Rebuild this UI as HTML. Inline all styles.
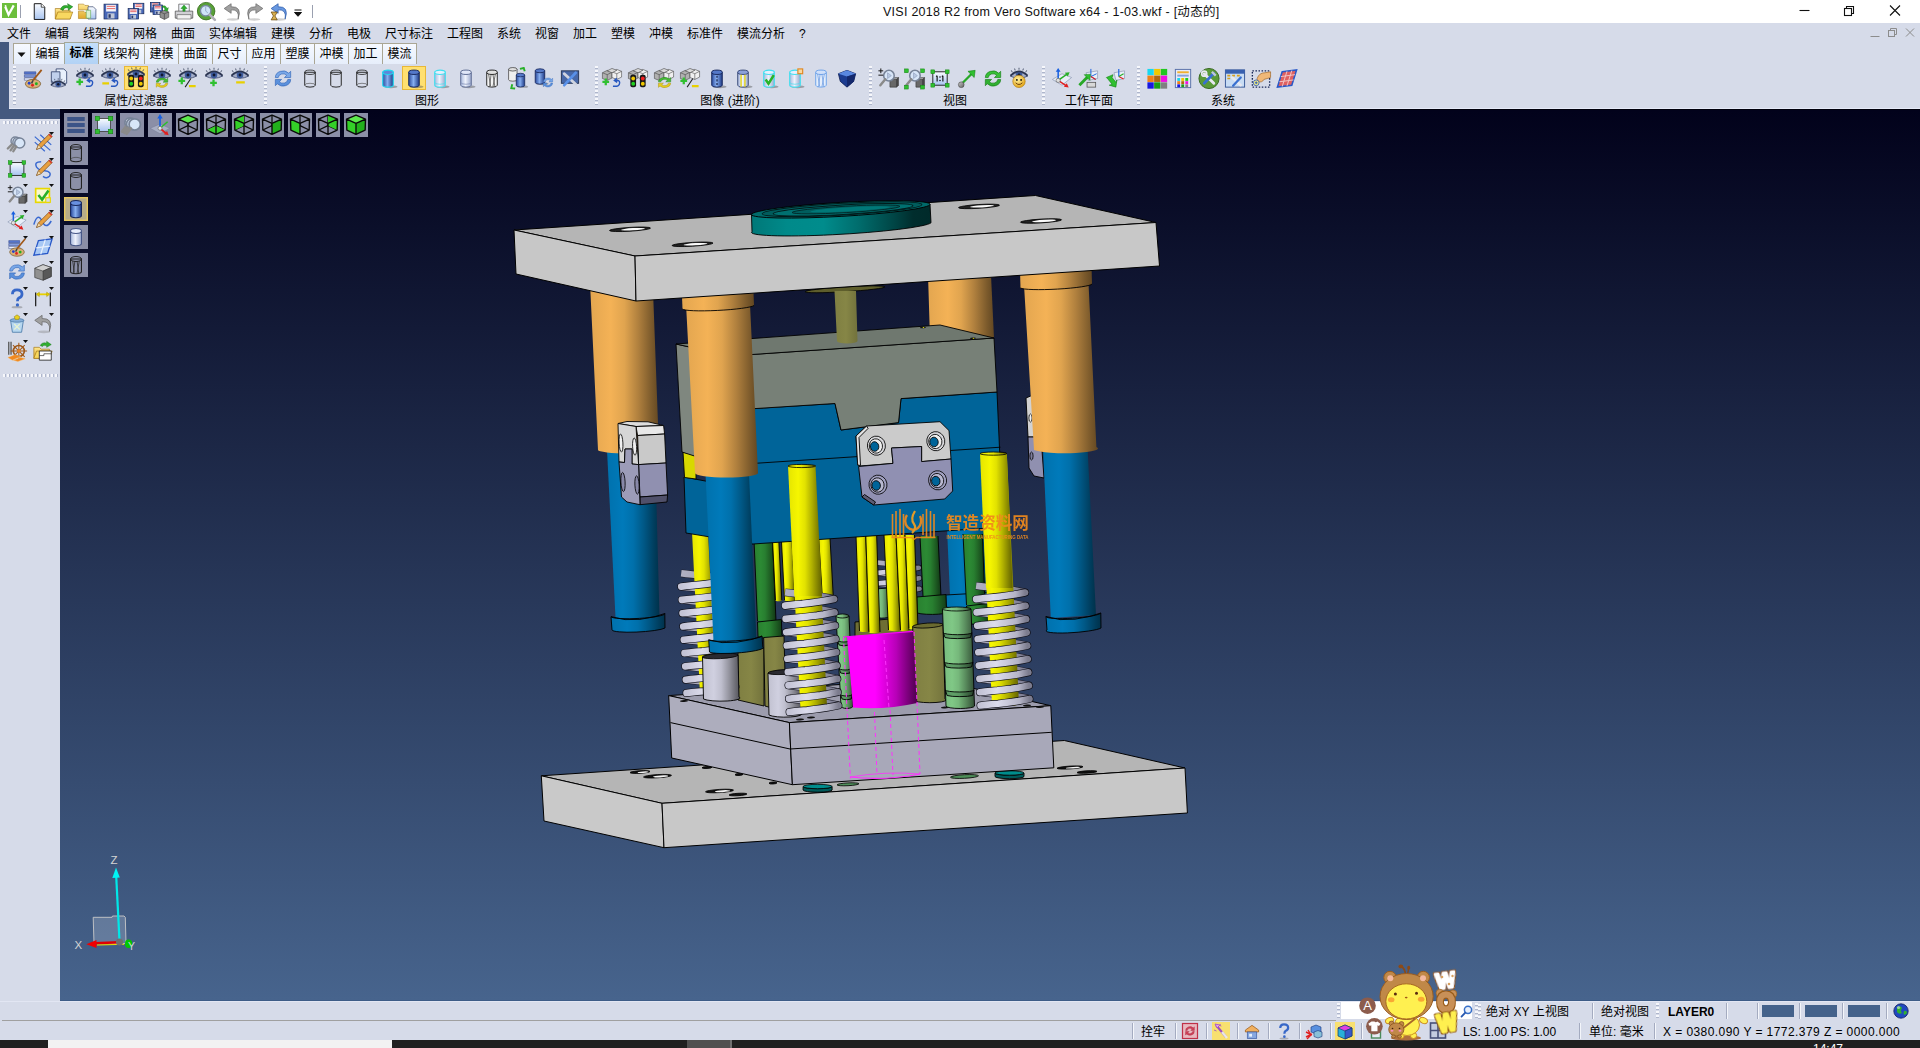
<!DOCTYPE html>
<html lang="zh-CN">
<head>
<meta charset="utf-8">
<title>VISI 2018 R2 from Vero Software x64 - 1-03.wkf - [动态的]</title>
<style>
*{box-sizing:border-box;margin:0;padding:0}
html,body{width:1920px;height:1048px;overflow:hidden;background:#d6dbe9;font-family:"Liberation Sans","Noto Sans CJK SC",sans-serif;font-size:12px;color:#000}
.abs{position:absolute}
#title{left:0;top:0;width:1920px;height:23px;background:#fff}
#title .cap{position:absolute;left:883px;top:1px;font-size:12.5px;white-space:nowrap;letter-spacing:0.26px;color:#111}
#menu{left:0;top:23px;width:1920px;height:20px;background:#d6dbe9}
#menu span{position:absolute;top:3px;white-space:nowrap;font-size:12px;line-height:16px}
#slate1{left:0;top:42px;width:9px;height:77px;background:#44597f}
#slate2{left:0;top:109px;width:60px;height:10px;background:#44597f}
#tabs{left:13px;top:43px;height:21px}
.tab{position:absolute;top:0;height:21px;border:1px solid #aaa694;border-bottom:none;background:linear-gradient(#f6f9ff,#e6eefb);text-align:center;line-height:21px;font-size:12px}
.tab.sel{background:linear-gradient(#c4dffa,#b2d2f5);top:-1px;height:22px;border-color:#a4a898;font-weight:bold;line-height:20px}
#tbar{left:9px;top:64px;width:1911px;height:45px;background:#d6dbe9;border-bottom:1px solid #e6eaf8}
.glabel{position:absolute;top:95px;font-size:12px;line-height:13px;white-space:nowrap;transform:translateX(-50%)}
.gsep{position:absolute;top:66px;width:3px;height:40px;background-image:repeating-linear-gradient(#f6f7fb 0,#f6f7fb 2px,#aeb6cc 2px,#aeb6cc 3px,transparent 3px,transparent 4px)}
#left{left:0;top:119px;width:60px;height:881px;background:#d6dbe9}
.hsep{position:absolute;left:3px;width:55px;height:3px;background-image:repeating-linear-gradient(90deg,#f6f7fb 0,#f6f7fb 2px,#aeb6cc 2px,#aeb6cc 3px,transparent 3px,transparent 4px)}
#view{left:60px;top:109px;width:1860px;height:892px;border-top:1px solid #00000c;border-bottom:1px solid #3d5c87;background:linear-gradient(#02021b,#47648d)}
#status{left:0;top:1000px;width:1920px;height:40px;background:linear-gradient(transparent 1px,#e2e6f3 1px,#e2e6f3 2px,#d6dbe9 2px)}
#task{left:0;top:1040px;width:1920px;height:8px;background:#202020}
.vb{position:absolute;width:22px;height:22px;background:#8b90aa}
.hline{position:absolute;left:2px;top:20px;width:1334px;height:1px;background:#a0a0a0}
.vdot{position:absolute;width:3px;height:16px;background-image:repeating-linear-gradient(#f6f7fb 0,#f6f7fb 2px,#aeb6cc 2px,#aeb6cc 3px,transparent 3px,transparent 4px)}
.vs{position:absolute;width:2px;height:16px;border-left:1px solid #a4abc0;border-right:1px solid #f4f6fb}
.st{position:absolute;white-space:nowrap;font-size:12px;line-height:16px;margin-top:1px}
.wc{position:absolute;top:0;width:46px;height:23px}
</style>
</head>
<body>
<div id="title" class="abs"><div class="cap">VISI 2018 R2 from Vero Software x64 - 1-03.wkf - [动态的]</div></div>
<div id="menu" class="abs">
<span style="left:7px">文件</span><span style="left:45px">编辑</span><span style="left:83px">线架构</span><span style="left:133px">网格</span><span style="left:171px">曲面</span><span style="left:209px">实体编辑</span><span style="left:271px">建模</span><span style="left:309px">分析</span><span style="left:347px">电极</span><span style="left:385px">尺寸标注</span><span style="left:447px">工程图</span><span style="left:497px">系统</span><span style="left:535px">视窗</span><span style="left:573px">加工</span><span style="left:611px">塑模</span><span style="left:649px">冲模</span><span style="left:687px">标准件</span><span style="left:737px">模流分析</span><span style="left:799px">?</span>
</div>
<svg class="abs" style="left:1780px;top:0" width="140" height="44" viewBox="0 0 140 44"><g fill="none" stroke="#111" stroke-width="1.1"><path d="M19.5,10.5 h10"/><rect x="64.5" y="8.5" width="7" height="7"/><path d="M66.5,8.5 v-2 h7 v7 h-2"/><path d="M110,5.5 l10,10 M120,5.5 l-10,10"/></g><g fill="none" stroke="#8c8c8c" stroke-width="1"><path d="M90.5,36.5 h9"/><rect x="108.500" y="30.5" width="6" height="6"/><path d="M110.500,30.500 v-2 h6 v6 h-2"/><path d="M126,28.500 l8,8 M134,28.500 l-8,8"/></g></svg>
<div id="slate1" class="abs"></div><div id="slate2" class="abs"></div>
<div id="tbar" class="abs"></div>
<div id="tabs" class="abs">
<div class="tab" style="left:0;width:18px"><svg width="10" height="6" viewBox="0 0 10 6" style="position:absolute;left:3px;top:8px"><path d="M0.500,0.500 h8 l-4,4.500 Z" fill="#111"/></svg></div>
<div class="tab" style="left:17px;width:35px">编辑</div>
<div class="tab sel" style="left:51px;width:35px">标准</div>
<div class="tab" style="left:85px;width:47px">线架构</div>
<div class="tab" style="left:131px;width:35px">建模</div>
<div class="tab" style="left:165px;width:35px">曲面</div>
<div class="tab" style="left:199px;width:35px">尺寸</div>
<div class="tab" style="left:233px;width:35px">应用</div>
<div class="tab" style="left:267px;width:35px">塑膜</div>
<div class="tab" style="left:301px;width:35px">冲模</div>
<div class="tab" style="left:335px;width:35px">加工</div>
<div class="tab" style="left:369px;width:35px">模流</div>
</div>
<div class="glabel" style="left:136px">属性/过滤器</div>
<div class="glabel" style="left:427px">图形</div>
<div class="glabel" style="left:730px">图像 (进阶)</div>
<div class="glabel" style="left:955px">视图</div>
<div class="glabel" style="left:1089px">工作平面</div>
<div class="glabel" style="left:1223px">系统</div>
<div class="gsep" style="left:13px"></div><div class="gsep" style="left:264px"></div><div class="gsep" style="left:595px"></div><div class="gsep" style="left:869px"></div><div class="gsep" style="left:1042px"></div><div class="gsep" style="left:1137px"></div>
<div id="left" class="abs"><div class="hsep" style="top:2px"></div><div class="hsep" style="top:255px"></div></div>
<div id="view" class="abs"></div>
<svg class="abs" id="model" style="left:0;top:0" width="1920" height="1048" viewBox="0 0 1920 1048"><defs><linearGradient id="sprb" x1="0" y1="0" x2="1" y2="0"><stop offset="0" stop-color="#b0b0c2"/><stop offset="0.5" stop-color="#a4a4b6"/><stop offset="1" stop-color="#74748a"/></linearGradient><linearGradient id="sprg" gradientUnits="objectBoundingBox" x1="0" y1="0" x2="1" y2="0"><stop offset="0" stop-color="#c4c4d6"/><stop offset="0.35" stop-color="#dcdcec"/><stop offset="0.8" stop-color="#b4b4c6"/><stop offset="1" stop-color="#7c7c8e"/></linearGradient><linearGradient id="g1" x1="0" y1="0" x2="1" y2="0"><stop offset="0" stop-color="#0071ad"/><stop offset="0.3" stop-color="#007aba"/><stop offset="0.5" stop-color="#0070ab"/><stop offset="0.7" stop-color="#005886"/><stop offset="0.9" stop-color="#003d5d"/><stop offset="1" stop-color="#00314a"/></linearGradient><linearGradient id="g2" x1="0" y1="0" x2="1" y2="0"><stop offset="0" stop-color="#77ba7d"/><stop offset="0.3" stop-color="#80c886"/><stop offset="0.5" stop-color="#76b87b"/><stop offset="0.7" stop-color="#5c9060"/><stop offset="0.9" stop-color="#406443"/><stop offset="1" stop-color="#335036"/></linearGradient><linearGradient id="g3" x1="0" y1="0" x2="1" y2="0"><stop offset="0" stop-color="#298030"/><stop offset="0.3" stop-color="#2c8a34"/><stop offset="0.5" stop-color="#287f30"/><stop offset="0.7" stop-color="#206325"/><stop offset="0.9" stop-color="#16451a"/><stop offset="1" stop-color="#123715"/></linearGradient><linearGradient id="g4" x1="0" y1="0" x2="1" y2="0"><stop offset="0" stop-color="#e5e500"/><stop offset="0.3" stop-color="#f6f600"/><stop offset="0.5" stop-color="#e2e200"/><stop offset="0.7" stop-color="#b1b100"/><stop offset="0.9" stop-color="#7b7b00"/><stop offset="1" stop-color="#626200"/></linearGradient><linearGradient id="g5" x1="0" y1="0" x2="1" y2="0"><stop offset="0" stop-color="#7f7f42"/><stop offset="0.5" stop-color="#868646"/><stop offset="1" stop-color="#72723c"/></linearGradient><linearGradient id="g6" x1="0" y1="0" x2="1" y2="0"><stop offset="0" stop-color="#c1c1d0"/><stop offset="0.3" stop-color="#d0d0e0"/><stop offset="0.5" stop-color="#bfbfce"/><stop offset="0.7" stop-color="#9696a1"/><stop offset="0.9" stop-color="#686870"/><stop offset="1" stop-color="#53535a"/></linearGradient><linearGradient id="g7" x1="0" y1="0" x2="1" y2="0"><stop offset="0" stop-color="#599561"/><stop offset="0.3" stop-color="#60a068"/><stop offset="0.5" stop-color="#589360"/><stop offset="0.7" stop-color="#45734b"/><stop offset="0.9" stop-color="#305034"/><stop offset="1" stop-color="#26402a"/></linearGradient><linearGradient id="g8" x1="0" y1="0" x2="1" y2="0"><stop offset="0" stop-color="#ff00ff"/><stop offset="0.4" stop-color="#ff00ff"/><stop offset="0.7" stop-color="#b800b8"/><stop offset="1" stop-color="#4c004c"/></linearGradient><linearGradient id="g9" x1="0" y1="0" x2="1" y2="0"><stop offset="0" stop-color="#e3a650"/><stop offset="0.3" stop-color="#f4b256"/><stop offset="0.5" stop-color="#e0a44f"/><stop offset="0.7" stop-color="#b0803e"/><stop offset="0.9" stop-color="#7a592b"/><stop offset="1" stop-color="#624722"/></linearGradient><linearGradient id="g10" x1="0" y1="0" x2="1" y2="0"><stop offset="0" stop-color="#007878"/><stop offset="0.2" stop-color="#008a8a"/><stop offset="0.4" stop-color="#008c8c"/><stop offset="0.6" stop-color="#006c6c"/><stop offset="0.8" stop-color="#004444"/><stop offset="0.9" stop-color="#002d2d"/><stop offset="1" stop-color="#002a2a"/></linearGradient></defs><polygon points="541.3,775.8 1064.3,740.5 1185,768 662,803.3" fill="#b5b5b5" stroke="#000" stroke-width="1" stroke-linejoin="round" />
<polygon points="541.3,775.8 662,803.3 664,847.7 544,821" fill="#c9c9c9" stroke="#000" stroke-width="1" stroke-linejoin="round" />
<polygon points="662,803.3 1185,768 1187.4,813 664,847.7" fill="#c8c8c8" stroke="#000" stroke-width="1" stroke-linejoin="round" />
<ellipse cx="640" cy="772" rx="10" ry="1.3" fill="#111" stroke="#000" stroke-width="0.8" transform="rotate(-3.5 640 772)" />
<ellipse cx="643" cy="772.2" rx="5.5" ry="0.8" fill="#f4f4f4" stroke="none" stroke-width="0" transform="rotate(-3.5 643 772.2)" />
<ellipse cx="657.5" cy="776.2" rx="14" ry="1.6" fill="#111" stroke="#000" stroke-width="0.8" transform="rotate(-3.5 657.5 776.2)" />
<ellipse cx="660.5" cy="776.4" rx="7.7" ry="1" fill="#f4f4f4" stroke="none" stroke-width="0" transform="rotate(-3.5 660.5 776.4)" />
<ellipse cx="719.5" cy="791" rx="14" ry="1.6" fill="#111" stroke="#000" stroke-width="0.8" transform="rotate(-3.5 719.5 791)" />
<ellipse cx="722.5" cy="791.2" rx="7.7" ry="1" fill="#f4f4f4" stroke="none" stroke-width="0" transform="rotate(-3.5 722.5 791.2)" />
<ellipse cx="738" cy="794.5" rx="9" ry="1.2" fill="#111" stroke="#000" stroke-width="0.8" transform="rotate(-3.5 738 794.5)" />
<ellipse cx="1070" cy="767.5" rx="13" ry="1.4" fill="#111" stroke="#000" stroke-width="0.8" transform="rotate(-3.5 1070 767.5)" />
<ellipse cx="1073" cy="767.7" rx="7.2" ry="0.8" fill="#f4f4f4" stroke="none" stroke-width="0" transform="rotate(-3.5 1073 767.7)" />
<ellipse cx="1087" cy="772" rx="10" ry="1.2" fill="#111" stroke="#000" stroke-width="0.8" transform="rotate(-3.5 1087 772)" />
<ellipse cx="707" cy="767.5" rx="5" ry="1" fill="#111" stroke="#000" stroke-width="0.8" transform="rotate(-3.5 707 767.5)" />
<ellipse cx="739" cy="774.5" rx="4" ry="1" fill="#111" stroke="#000" stroke-width="0.8" transform="rotate(-3.5 739 774.5)" />
<ellipse cx="773" cy="783" rx="4" ry="1" fill="#111" stroke="#000" stroke-width="0.8" transform="rotate(-3.5 773 783)" />
<path d="M803.1,786.5 A14.5,2.2 0 0 0 832.1,786.5 L832.1,790 A14.5,2.2 0 0 1 803.1,790 Z" fill="#005a5a" stroke="#000" stroke-width="0.9" stroke-linejoin="round" />
<ellipse cx="817.6" cy="786.5" rx="14.5" ry="2.2" fill="#008c8c" stroke="#000" stroke-width="0.8" />
<path d="M995,773 A14.5,2.2 0 0 0 1024,773 L1024,776.5 A14.5,2.2 0 0 1 995,776.5 Z" fill="#005a5a" stroke="#000" stroke-width="0.9" stroke-linejoin="round" />
<ellipse cx="1009.5" cy="773" rx="14.5" ry="2.2" fill="#008c8c" stroke="#000" stroke-width="0.8" />
<ellipse cx="964.5" cy="776.5" rx="14" ry="1.8" fill="#4f8f5a" stroke="#000" stroke-width="0.8" transform="rotate(-3 964.5 776.5)" />
<ellipse cx="848" cy="784.3" rx="11" ry="1.4" fill="#4f8f5a" stroke="#000" stroke-width="0.8" transform="rotate(-3 848 784.3)" />
<polygon points="668.7,695.6 930,678.7 1050.8,705.7 789.4,722.6" fill="#9c9cad" stroke="#000" stroke-width="1" stroke-linejoin="round" />
<polygon points="668.7,695.6 789.4,722.6 792.4,784.7 671.7,758" fill="#adadbd" stroke="#000" stroke-width="1" stroke-linejoin="round" />
<polygon points="789.4,722.6 1050.8,705.7 1053.8,767.8 792.4,784.7" fill="#a8a8b9" stroke="#000" stroke-width="1" stroke-linejoin="round" />
<polyline points="670.5,722.6 790,749 1051.7,732.3" fill="none" stroke="#000" stroke-width="1" />
<ellipse cx="684" cy="701" rx="4" ry="0.9" fill="#111" stroke="none" stroke-width="0" transform="rotate(-3 684 701)" />
<ellipse cx="800" cy="719.5" rx="4" ry="0.9" fill="#111" stroke="none" stroke-width="0" transform="rotate(-3 800 719.5)" />
<ellipse cx="811" cy="717.5" rx="4" ry="0.9" fill="#111" stroke="none" stroke-width="0" transform="rotate(-3 811 717.5)" />
<ellipse cx="1027" cy="705.5" rx="4" ry="0.9" fill="#111" stroke="none" stroke-width="0" transform="rotate(-3 1027 705.5)" />
<ellipse cx="1040" cy="707" rx="4" ry="0.9" fill="#111" stroke="none" stroke-width="0" transform="rotate(-3 1040 707)" />
<ellipse cx="945" cy="707.5" rx="4" ry="0.9" fill="#111" stroke="none" stroke-width="0" transform="rotate(-3 945 707.5)" />
<path d="M947,528 L990,528 L993,596 L950,596 Z" fill="url(#g1)" stroke="none" stroke-width="0.6" stroke-linejoin="round" />
<path d="M945.5,595 L999,592 L999.5,604 A26.8,3 0 0 1 946,607 Z" fill="url(#g1)" stroke="#000" stroke-width="0.9" stroke-linejoin="round" />
<polyline points="919.5,588.8 915.1,587.9 909.9,587 904.1,586.2 898,585.5 891.9,584.9 886.1,584.4 880.9,583.9 876.5,583.5" fill="none" stroke="#20202c" stroke-width="5.8" stroke-linecap="butt"/>
<polyline points="919.5,588.8 915.1,587.9 909.9,587 904.1,586.2 898,585.5 891.9,584.9 886.1,584.4 880.9,583.9 876.5,583.5" fill="none" stroke="url(#sprb)" stroke-width="4.6" stroke-linecap="butt"/>
<polyline points="919.2,578.2 914.7,577.4 909.5,576.5 903.8,575.7 897.7,575 891.6,574.4 885.8,573.9 880.6,573.4 876.2,573" fill="none" stroke="#20202c" stroke-width="5.8" stroke-linecap="butt"/>
<polyline points="919.2,578.2 914.7,577.4 909.5,576.5 903.8,575.7 897.7,575 891.6,574.4 885.8,573.9 880.6,573.4 876.2,573" fill="none" stroke="url(#sprb)" stroke-width="4.6" stroke-linecap="butt"/>
<polyline points="918.8,567.8 914.4,566.9 909.2,566 903.4,565.2 897.3,564.5 891.3,563.9 885.5,563.4 880.3,562.9 875.8,562.5" fill="none" stroke="#20202c" stroke-width="5.8" stroke-linecap="butt"/>
<polyline points="918.8,567.8 914.4,566.9 909.2,566 903.4,565.2 897.3,564.5 891.3,563.9 885.5,563.4 880.3,562.9 875.8,562.5" fill="none" stroke="url(#sprb)" stroke-width="4.6" stroke-linecap="butt"/>
<polyline points="876.5,594 880.9,593.6 886.1,593.1 891.9,592.6 898,592 904.1,591.3 909.9,590.5 915.1,589.6 919.5,588.8" fill="none" stroke="#101018" stroke-width="5.8999999999999995" stroke-linecap="round"/>
<polyline points="876.5,594 880.9,593.6 886.1,593.1 891.9,592.6 898,592 904.1,591.3 909.9,590.5 915.1,589.6 919.5,588.8" fill="none" stroke="url(#sprg)" stroke-width="4.6" stroke-linecap="round"/>
<polyline points="876.2,583.5 880.6,583.1 885.8,582.6 891.6,582.1 897.7,581.5 903.8,580.8 909.5,580 914.7,579.1 919.2,578.2" fill="none" stroke="#101018" stroke-width="5.8999999999999995" stroke-linecap="round"/>
<polyline points="876.2,583.5 880.6,583.1 885.8,582.6 891.6,582.1 897.7,581.5 903.8,580.8 909.5,580 914.7,579.1 919.2,578.2" fill="none" stroke="url(#sprg)" stroke-width="4.6" stroke-linecap="round"/>
<polyline points="875.8,573 880.3,572.6 885.5,572.1 891.3,571.6 897.3,571 903.4,570.3 909.2,569.5 914.4,568.6 918.8,567.8" fill="none" stroke="#101018" stroke-width="5.8999999999999995" stroke-linecap="round"/>
<polyline points="875.8,573 880.3,572.6 885.5,572.1 891.3,571.6 897.3,571 903.4,570.3 909.2,569.5 914.4,568.6 918.8,567.8" fill="none" stroke="url(#sprg)" stroke-width="4.6" stroke-linecap="round"/>
<polygon points="855,622 913,617 913,636 855,640" fill="#6e6e34" stroke="#000" stroke-width="0.9" stroke-linejoin="round" />
<path d="M875,589 L888.4,588 L889,616 A6.5,1.5 0 0 1 876,617 Z" fill="url(#g2)" stroke="#000" stroke-width="0.9" stroke-linejoin="round" />
<path d="M754,540 L772.5,540 L776,621 L757.5,621 Z" fill="url(#g3)" stroke="none" stroke-width="0.6" stroke-linejoin="round" />
<polyline points="754,540 757.5,621" fill="none" stroke="#000" stroke-width="0.9" />
<polyline points="772.5,540 776,621" fill="none" stroke="#000" stroke-width="0.9" />
<path d="M757.5,622 L781.4,619.5 L781.9,635 A11.9,2.2 0 0 1 758,637 Z" fill="url(#g3)" stroke="#000" stroke-width="0.9" stroke-linejoin="round" />
<path d="M920,536 L938,536 L941,596 L923,596 Z" fill="url(#g3)" stroke="none" stroke-width="0.6" stroke-linejoin="round" />
<polyline points="920,536 923,596" fill="none" stroke="#000" stroke-width="0.9" />
<polyline points="938,536 941,596" fill="none" stroke="#000" stroke-width="0.9" />
<path d="M916.8,597 L946,594.5 L946.5,611 A14.6,2.2 0 0 1 917.3,613 Z" fill="url(#g3)" stroke="#000" stroke-width="0.9" stroke-linejoin="round" />
<path d="M963,534 L982.4,534 L985,605 L966.5,605 Z" fill="url(#g3)" stroke="none" stroke-width="0.6" stroke-linejoin="round" />
<polyline points="963,534 966.5,605" fill="none" stroke="#000" stroke-width="0.9" />
<polyline points="982.4,534 985,605" fill="none" stroke="#000" stroke-width="0.9" />
<path d="M966.5,606 L988,603.5 L988.5,621 A10.8,2.2 0 0 1 967,623 Z" fill="url(#g3)" stroke="#000" stroke-width="0.9" stroke-linejoin="round" />
<path d="M772.5,540 L778.8,540 L781.8,600 A3.1,1.2 0 0 1 775.5,600 Z" fill="url(#g4)" stroke="none" stroke-width="0.6" stroke-linejoin="round" />
<polyline points="772.5,540 775.5,600" fill="none" stroke="#000" stroke-width="0.9" />
<polyline points="778.8,540 781.8,600" fill="none" stroke="#000" stroke-width="0.9" />
<path d="M781.4,540 L792,540 L795,600 A5.2,1.2 0 0 1 784.5,600 Z" fill="url(#g4)" stroke="none" stroke-width="0.6" stroke-linejoin="round" />
<polyline points="781.4,540 784.5,600" fill="none" stroke="#000" stroke-width="0.9" />
<polyline points="792,540 795,600" fill="none" stroke="#000" stroke-width="0.9" />
<path d="M818.7,538 L830,538 L833.5,600 A5.5,1.2 0 0 1 822.5,600 Z" fill="url(#g4)" stroke="none" stroke-width="0.6" stroke-linejoin="round" />
<polyline points="818.7,538 822.5,600" fill="none" stroke="#000" stroke-width="0.9" />
<polyline points="830,538 833.5,600" fill="none" stroke="#000" stroke-width="0.9" />
<path d="M856,536 L865.8,536 L869,631 A4.8,1.2 0 0 1 859.5,631 Z" fill="url(#g4)" stroke="none" stroke-width="0.6" stroke-linejoin="round" />
<polyline points="856,536 859.5,631" fill="none" stroke="#000" stroke-width="0.9" />
<polyline points="865.8,536 869,631" fill="none" stroke="#000" stroke-width="0.9" />
<path d="M865.8,536 L876.7,536 L880,632 A5.5,1.2 0 0 1 869,632 Z" fill="url(#g4)" stroke="none" stroke-width="0.6" stroke-linejoin="round" />
<polyline points="865.8,536 869,632" fill="none" stroke="#000" stroke-width="0.9" />
<polyline points="876.7,536 880,632" fill="none" stroke="#000" stroke-width="0.9" />
<path d="M884,535 L896,535 L900.5,630 A6,1.2 0 0 1 888.5,630 Z" fill="url(#g4)" stroke="none" stroke-width="0.6" stroke-linejoin="round" />
<polyline points="884,535 888.5,630" fill="none" stroke="#000" stroke-width="0.9" />
<polyline points="896,535 900.5,630" fill="none" stroke="#000" stroke-width="0.9" />
<path d="M896,535 L905,535 L909,630 A4.2,1.2 0 0 1 900.5,630 Z" fill="url(#g4)" stroke="none" stroke-width="0.6" stroke-linejoin="round" />
<polyline points="896,535 900.5,630" fill="none" stroke="#000" stroke-width="0.9" />
<polyline points="905,535 909,630" fill="none" stroke="#000" stroke-width="0.9" />
<path d="M905,535 L914.5,535 L918,628 A4.5,1.2 0 0 1 909,628 Z" fill="url(#g4)" stroke="none" stroke-width="0.6" stroke-linejoin="round" />
<polyline points="905,535 909,628" fill="none" stroke="#000" stroke-width="0.9" />
<polyline points="914.5,535 918,628" fill="none" stroke="#000" stroke-width="0.9" />
<polygon points="738,652 764,648 764,706 738,700" fill="url(#g5)" stroke="#000" stroke-width="0.9" stroke-linejoin="round" />
<path d="M763.7,637.5 L784,636 L786,712 L765,706 Z" fill="url(#g5)" stroke="#000" stroke-width="0.9" stroke-linejoin="round" />
<polyline points="735.5,686.4 730.4,685.3 724.5,684.2 717.9,683.2 711,682.3 704.1,681.5 697.5,680.9 691.6,680.3 686.5,679.7" fill="none" stroke="#20202c" stroke-width="7.8" stroke-linecap="butt"/>
<polyline points="735.5,686.4 730.4,685.3 724.5,684.2 717.9,683.2 711,682.3 704.1,681.5 697.5,680.9 691.6,680.3 686.5,679.7" fill="none" stroke="url(#sprb)" stroke-width="6.6" stroke-linecap="butt"/>
<polyline points="734.8,673.1 729.8,672 723.9,670.9 717.3,669.9 710.3,669 703.4,668.2 696.8,667.6 690.9,667 685.8,666.4" fill="none" stroke="#20202c" stroke-width="7.8" stroke-linecap="butt"/>
<polyline points="734.8,673.1 729.8,672 723.9,670.9 717.3,669.9 710.3,669 703.4,668.2 696.8,667.6 690.9,667 685.8,666.4" fill="none" stroke="url(#sprb)" stroke-width="6.6" stroke-linecap="butt"/>
<polyline points="734.2,659.8 729.1,658.7 723.2,657.6 716.6,656.6 709.7,655.7 702.7,654.9 696.2,654.3 690.2,653.7 685.2,653.1" fill="none" stroke="#20202c" stroke-width="7.8" stroke-linecap="butt"/>
<polyline points="734.2,659.8 729.1,658.7 723.2,657.6 716.6,656.6 709.7,655.7 702.7,654.9 696.2,654.3 690.2,653.7 685.2,653.1" fill="none" stroke="url(#sprb)" stroke-width="6.6" stroke-linecap="butt"/>
<polyline points="733.5,646.5 728.4,645.4 722.5,644.3 715.9,643.3 709,642.4 702.1,641.6 695.5,641 689.6,640.4 684.5,639.8" fill="none" stroke="#20202c" stroke-width="7.8" stroke-linecap="butt"/>
<polyline points="733.5,646.5 728.4,645.4 722.5,644.3 715.9,643.3 709,642.4 702.1,641.6 695.5,641 689.6,640.4 684.5,639.8" fill="none" stroke="url(#sprb)" stroke-width="6.6" stroke-linecap="butt"/>
<polyline points="732.8,633.2 727.8,632.1 721.9,631 715.3,630 708.3,629.1 701.4,628.3 694.8,627.7 688.9,627.1 683.8,626.5" fill="none" stroke="#20202c" stroke-width="7.8" stroke-linecap="butt"/>
<polyline points="732.8,633.2 727.8,632.1 721.9,631 715.3,630 708.3,629.1 701.4,628.3 694.8,627.7 688.9,627.1 683.8,626.5" fill="none" stroke="url(#sprb)" stroke-width="6.6" stroke-linecap="butt"/>
<polyline points="732.2,619.9 727.1,618.8 721.2,617.7 714.6,616.7 707.7,615.8 700.7,615 694.2,614.4 688.2,613.8 683.2,613.2" fill="none" stroke="#20202c" stroke-width="7.8" stroke-linecap="butt"/>
<polyline points="732.2,619.9 727.1,618.8 721.2,617.7 714.6,616.7 707.7,615.8 700.7,615 694.2,614.4 688.2,613.8 683.2,613.2" fill="none" stroke="url(#sprb)" stroke-width="6.6" stroke-linecap="butt"/>
<polyline points="731.5,606.6 726.5,605.5 720.5,604.4 713.9,603.4 707,602.5 700.1,601.7 693.5,601.1 687.6,600.5 682.5,599.9" fill="none" stroke="#20202c" stroke-width="7.8" stroke-linecap="butt"/>
<polyline points="731.5,606.6 726.5,605.5 720.5,604.4 713.9,603.4 707,602.5 700.1,601.7 693.5,601.1 687.6,600.5 682.5,599.9" fill="none" stroke="url(#sprb)" stroke-width="6.6" stroke-linecap="butt"/>
<polyline points="730.8,593.3 725.8,592.2 719.9,591.1 713.3,590.1 706.3,589.2 699.4,588.4 692.8,587.8 686.9,587.2 681.8,586.6" fill="none" stroke="#20202c" stroke-width="7.8" stroke-linecap="butt"/>
<polyline points="730.8,593.3 725.8,592.2 719.9,591.1 713.3,590.1 706.3,589.2 699.4,588.4 692.8,587.8 686.9,587.2 681.8,586.6" fill="none" stroke="url(#sprb)" stroke-width="6.6" stroke-linecap="butt"/>
<polyline points="730.2,580 725.1,578.9 719.2,577.8 712.6,576.8 705.7,575.9 698.7,575.1 692.2,574.5 686.2,573.9 681.2,573.3" fill="none" stroke="#20202c" stroke-width="7.8" stroke-linecap="butt"/>
<polyline points="730.2,580 725.1,578.9 719.2,577.8 712.6,576.8 705.7,575.9 698.7,575.1 692.2,574.5 686.2,573.9 681.2,573.3" fill="none" stroke="url(#sprb)" stroke-width="6.6" stroke-linecap="butt"/>
<path d="M692,532 L708,532 L716,694 A8,1.2 0 0 1 700,694 Z" fill="url(#g4)" stroke="none" stroke-width="0.6" stroke-linejoin="round" />
<polyline points="686.5,693 691.6,692.4 697.5,691.8 704.1,691.2 711,690.4 717.9,689.5 724.5,688.5 730.4,687.4 735.5,686.4" fill="none" stroke="#101018" stroke-width="7.8999999999999995" stroke-linecap="round"/>
<polyline points="686.5,693 691.6,692.4 697.5,691.8 704.1,691.2 711,690.4 717.9,689.5 724.5,688.5 730.4,687.4 735.5,686.4" fill="none" stroke="url(#sprg)" stroke-width="6.6" stroke-linecap="round"/>
<polyline points="685.8,679.7 690.9,679.1 696.8,678.5 703.4,677.9 710.3,677.1 717.3,676.2 723.9,675.2 729.8,674.1 734.8,673.1" fill="none" stroke="#101018" stroke-width="7.8999999999999995" stroke-linecap="round"/>
<polyline points="685.8,679.7 690.9,679.1 696.8,678.5 703.4,677.9 710.3,677.1 717.3,676.2 723.9,675.2 729.8,674.1 734.8,673.1" fill="none" stroke="url(#sprg)" stroke-width="6.6" stroke-linecap="round"/>
<polyline points="685.2,666.4 690.2,665.8 696.2,665.2 702.7,664.6 709.7,663.8 716.6,662.9 723.2,661.9 729.1,660.8 734.2,659.8" fill="none" stroke="#101018" stroke-width="7.8999999999999995" stroke-linecap="round"/>
<polyline points="685.2,666.4 690.2,665.8 696.2,665.2 702.7,664.6 709.7,663.8 716.6,662.9 723.2,661.9 729.1,660.8 734.2,659.8" fill="none" stroke="url(#sprg)" stroke-width="6.6" stroke-linecap="round"/>
<polyline points="684.5,653.1 689.6,652.5 695.5,651.9 702.1,651.3 709,650.5 715.9,649.6 722.5,648.6 728.4,647.5 733.5,646.5" fill="none" stroke="#101018" stroke-width="7.8999999999999995" stroke-linecap="round"/>
<polyline points="684.5,653.1 689.6,652.5 695.5,651.9 702.1,651.3 709,650.5 715.9,649.6 722.5,648.6 728.4,647.5 733.5,646.5" fill="none" stroke="url(#sprg)" stroke-width="6.6" stroke-linecap="round"/>
<polyline points="683.8,639.8 688.9,639.2 694.8,638.6 701.4,638 708.3,637.2 715.3,636.3 721.9,635.3 727.8,634.2 732.8,633.2" fill="none" stroke="#101018" stroke-width="7.8999999999999995" stroke-linecap="round"/>
<polyline points="683.8,639.8 688.9,639.2 694.8,638.6 701.4,638 708.3,637.2 715.3,636.3 721.9,635.3 727.8,634.2 732.8,633.2" fill="none" stroke="url(#sprg)" stroke-width="6.6" stroke-linecap="round"/>
<polyline points="683.2,626.5 688.2,625.9 694.2,625.3 700.7,624.7 707.7,623.9 714.6,623 721.2,622 727.1,620.9 732.2,619.9" fill="none" stroke="#101018" stroke-width="7.8999999999999995" stroke-linecap="round"/>
<polyline points="683.2,626.5 688.2,625.9 694.2,625.3 700.7,624.7 707.7,623.9 714.6,623 721.2,622 727.1,620.9 732.2,619.9" fill="none" stroke="url(#sprg)" stroke-width="6.6" stroke-linecap="round"/>
<polyline points="682.5,613.2 687.6,612.6 693.5,612 700.1,611.4 707,610.6 713.9,609.7 720.5,608.7 726.5,607.6 731.5,606.6" fill="none" stroke="#101018" stroke-width="7.8999999999999995" stroke-linecap="round"/>
<polyline points="682.5,613.2 687.6,612.6 693.5,612 700.1,611.4 707,610.6 713.9,609.7 720.5,608.7 726.5,607.6 731.5,606.6" fill="none" stroke="url(#sprg)" stroke-width="6.6" stroke-linecap="round"/>
<polyline points="681.8,599.9 686.9,599.3 692.8,598.7 699.4,598.1 706.3,597.3 713.3,596.4 719.9,595.4 725.8,594.3 730.8,593.3" fill="none" stroke="#101018" stroke-width="7.8999999999999995" stroke-linecap="round"/>
<polyline points="681.8,599.9 686.9,599.3 692.8,598.7 699.4,598.1 706.3,597.3 713.3,596.4 719.9,595.4 725.8,594.3 730.8,593.3" fill="none" stroke="url(#sprg)" stroke-width="6.6" stroke-linecap="round"/>
<polyline points="681.2,586.6 686.2,586 692.2,585.4 698.7,584.8 705.7,584 712.6,583.1 719.2,582.1 725.1,581 730.2,580" fill="none" stroke="#101018" stroke-width="7.8999999999999995" stroke-linecap="round"/>
<polyline points="681.2,586.6 686.2,586 692.2,585.4 698.7,584.8 705.7,584 712.6,583.1 719.2,582.1 725.1,581 730.2,580" fill="none" stroke="url(#sprg)" stroke-width="6.6" stroke-linecap="round"/>
<path d="M607,450 L655,450 L659.5,617 L615.6,619 Z" fill="url(#g1)" stroke="none" stroke-width="0.6" stroke-linejoin="round" />
<path d="M611,616.7 L612,630 A27,3.5 -3 0 0 665,628 L664.8,613.5 A27,3.5 -3 0 1 611,616.7 Z" fill="url(#g1)" stroke="#000" stroke-width="0.9" stroke-linejoin="round" />
<polyline points="611,616.7 625,619.6 640,619.4 655,616.6 664.8,613.5" fill="none" stroke="#000" stroke-width="0.9" />
<path d="M702.5,657 L738,655 L739,697 A17.8,3 0 0 1 703.5,699 Z" fill="url(#g6)" stroke="#000" stroke-width="0.9" stroke-linejoin="round" />
<ellipse cx="720.2" cy="656" rx="17.8" ry="2.6" fill="#2a2a30" stroke="#000" stroke-width="0.8" transform="rotate(-3.2 720.2 656)" />
<path d="M768,673 L800,671 L801,713 A16,3 0 0 1 769,715 Z" fill="url(#g6)" stroke="#000" stroke-width="0.9" stroke-linejoin="round" />
<ellipse cx="784" cy="672" rx="16" ry="2.4" fill="#2a2a30" stroke="#000" stroke-width="0.8" transform="rotate(-3.6 784 672)" />
<path d="M836,616 L849,616 L853,706 A6,2.5 0 0 1 841,706 Z" fill="url(#g2)" stroke="#000" stroke-width="0.9" stroke-linejoin="round" />
<ellipse cx="842.5" cy="616" rx="6.5" ry="2" fill="url(#g2)" stroke="#000" stroke-width="0.8" />
<path d="M837.3,640 A6.4,2 0 0 0 850.1,640 L848.8,645 A6.3,2 0 0 1 839.1,645 Z" fill="url(#g7)" stroke="#000" stroke-width="0.9" stroke-linejoin="round" />
<path d="M838.9,668 A6.2,2 0 0 0 851.3,668 L850,673 A6.2,2 0 0 1 840.7,673 Z" fill="url(#g7)" stroke="#000" stroke-width="0.9" stroke-linejoin="round" />
<path d="M840.3,694 A6.1,2 0 0 0 852.5,694 L851.2,699 A6,2 0 0 1 842.1,699 Z" fill="url(#g7)" stroke="#000" stroke-width="0.9" stroke-linejoin="round" />
<polyline points="838.5,705.4 833.4,704.3 827.5,703.2 820.9,702.2 814,701.3 807.1,700.5 800.5,699.9 794.6,699.3 789.5,698.7" fill="none" stroke="#20202c" stroke-width="7.8" stroke-linecap="butt"/>
<polyline points="838.5,705.4 833.4,704.3 827.5,703.2 820.9,702.2 814,701.3 807.1,700.5 800.5,699.9 794.6,699.3 789.5,698.7" fill="none" stroke="url(#sprb)" stroke-width="6.6" stroke-linecap="butt"/>
<polyline points="837.9,692.1 832.9,691 827,689.9 820.4,688.9 813.4,688 806.5,687.2 799.9,686.6 794,686 788.9,685.4" fill="none" stroke="#20202c" stroke-width="7.8" stroke-linecap="butt"/>
<polyline points="837.9,692.1 832.9,691 827,689.9 820.4,688.9 813.4,688 806.5,687.2 799.9,686.6 794,686 788.9,685.4" fill="none" stroke="url(#sprb)" stroke-width="6.6" stroke-linecap="butt"/>
<polyline points="837.4,678.8 832.3,677.7 826.4,676.6 819.8,675.6 812.9,674.7 806,673.9 799.4,673.3 793.5,672.7 788.4,672.1" fill="none" stroke="#20202c" stroke-width="7.8" stroke-linecap="butt"/>
<polyline points="837.4,678.8 832.3,677.7 826.4,676.6 819.8,675.6 812.9,674.7 806,673.9 799.4,673.3 793.5,672.7 788.4,672.1" fill="none" stroke="url(#sprb)" stroke-width="6.6" stroke-linecap="butt"/>
<polyline points="836.8,665.5 831.8,664.4 825.9,663.3 819.3,662.3 812.3,661.4 805.4,660.6 798.8,660 792.9,659.4 787.8,658.8" fill="none" stroke="#20202c" stroke-width="7.8" stroke-linecap="butt"/>
<polyline points="836.8,665.5 831.8,664.4 825.9,663.3 819.3,662.3 812.3,661.4 805.4,660.6 798.8,660 792.9,659.4 787.8,658.8" fill="none" stroke="url(#sprb)" stroke-width="6.6" stroke-linecap="butt"/>
<polyline points="836.3,652.2 831.2,651.1 825.3,650 818.7,649 811.8,648.1 804.8,647.3 798.3,646.7 792.3,646.1 787.3,645.5" fill="none" stroke="#20202c" stroke-width="7.8" stroke-linecap="butt"/>
<polyline points="836.3,652.2 831.2,651.1 825.3,650 818.7,649 811.8,648.1 804.8,647.3 798.3,646.7 792.3,646.1 787.3,645.5" fill="none" stroke="url(#sprb)" stroke-width="6.6" stroke-linecap="butt"/>
<polyline points="835.7,638.9 830.7,637.8 824.7,636.7 818.2,635.7 811.2,634.8 804.3,634 797.7,633.4 791.8,632.8 786.7,632.2" fill="none" stroke="#20202c" stroke-width="7.8" stroke-linecap="butt"/>
<polyline points="835.7,638.9 830.7,637.8 824.7,636.7 818.2,635.7 811.2,634.8 804.3,634 797.7,633.4 791.8,632.8 786.7,632.2" fill="none" stroke="url(#sprb)" stroke-width="6.6" stroke-linecap="butt"/>
<polyline points="835.2,625.6 830.1,624.5 824.2,623.4 817.6,622.4 810.7,621.5 803.7,620.7 797.2,620.1 791.2,619.5 786.2,618.9" fill="none" stroke="#20202c" stroke-width="7.8" stroke-linecap="butt"/>
<polyline points="835.2,625.6 830.1,624.5 824.2,623.4 817.6,622.4 810.7,621.5 803.7,620.7 797.2,620.1 791.2,619.5 786.2,618.9" fill="none" stroke="url(#sprb)" stroke-width="6.6" stroke-linecap="butt"/>
<polyline points="834.6,612.3 829.6,611.2 823.6,610.1 817.1,609.1 810.1,608.2 803.2,607.4 796.6,606.8 790.7,606.2 785.6,605.6" fill="none" stroke="#20202c" stroke-width="7.8" stroke-linecap="butt"/>
<polyline points="834.6,612.3 829.6,611.2 823.6,610.1 817.1,609.1 810.1,608.2 803.2,607.4 796.6,606.8 790.7,606.2 785.6,605.6" fill="none" stroke="url(#sprb)" stroke-width="6.6" stroke-linecap="butt"/>
<polyline points="834.1,599 829,597.9 823.1,596.8 816.5,595.8 809.6,594.9 802.6,594.1 796,593.5 790.1,592.9 785.1,592.3" fill="none" stroke="#20202c" stroke-width="7.8" stroke-linecap="butt"/>
<polyline points="834.1,599 829,597.9 823.1,596.8 816.5,595.8 809.6,594.9 802.6,594.1 796,593.5 790.1,592.9 785.1,592.3" fill="none" stroke="url(#sprb)" stroke-width="6.6" stroke-linecap="butt"/>
<path d="M788,466 L815.5,466 L827.2,710 A13.4,2 0 0 1 800.5,710 Z" fill="url(#g4)" stroke="none" stroke-width="0.6" stroke-linejoin="round" />
<ellipse cx="801.8" cy="466" rx="13.8" ry="1.6" fill="url(#g4)" stroke="#000" stroke-width="0.8" />
<polyline points="789.5,712 794.6,711.4 800.5,710.8 807.1,710.2 814,709.4 820.9,708.5 827.5,707.5 833.4,706.4 838.5,705.4" fill="none" stroke="#101018" stroke-width="7.8999999999999995" stroke-linecap="round"/>
<polyline points="789.5,712 794.6,711.4 800.5,710.8 807.1,710.2 814,709.4 820.9,708.5 827.5,707.5 833.4,706.4 838.5,705.4" fill="none" stroke="url(#sprg)" stroke-width="6.6" stroke-linecap="round"/>
<polyline points="788.9,698.7 794,698.1 799.9,697.5 806.5,696.9 813.4,696.1 820.4,695.2 827,694.2 832.9,693.1 837.9,692.1" fill="none" stroke="#101018" stroke-width="7.8999999999999995" stroke-linecap="round"/>
<polyline points="788.9,698.7 794,698.1 799.9,697.5 806.5,696.9 813.4,696.1 820.4,695.2 827,694.2 832.9,693.1 837.9,692.1" fill="none" stroke="url(#sprg)" stroke-width="6.6" stroke-linecap="round"/>
<polyline points="788.4,685.4 793.5,684.8 799.4,684.2 806,683.6 812.9,682.8 819.8,681.9 826.4,680.9 832.3,679.8 837.4,678.8" fill="none" stroke="#101018" stroke-width="7.8999999999999995" stroke-linecap="round"/>
<polyline points="788.4,685.4 793.5,684.8 799.4,684.2 806,683.6 812.9,682.8 819.8,681.9 826.4,680.9 832.3,679.8 837.4,678.8" fill="none" stroke="url(#sprg)" stroke-width="6.6" stroke-linecap="round"/>
<polyline points="787.8,672.1 792.9,671.5 798.8,670.9 805.4,670.3 812.3,669.5 819.3,668.6 825.9,667.6 831.8,666.5 836.8,665.5" fill="none" stroke="#101018" stroke-width="7.8999999999999995" stroke-linecap="round"/>
<polyline points="787.8,672.1 792.9,671.5 798.8,670.9 805.4,670.3 812.3,669.5 819.3,668.6 825.9,667.6 831.8,666.5 836.8,665.5" fill="none" stroke="url(#sprg)" stroke-width="6.6" stroke-linecap="round"/>
<polyline points="787.3,658.8 792.3,658.2 798.3,657.6 804.8,657 811.8,656.2 818.7,655.3 825.3,654.3 831.2,653.2 836.3,652.2" fill="none" stroke="#101018" stroke-width="7.8999999999999995" stroke-linecap="round"/>
<polyline points="787.3,658.8 792.3,658.2 798.3,657.6 804.8,657 811.8,656.2 818.7,655.3 825.3,654.3 831.2,653.2 836.3,652.2" fill="none" stroke="url(#sprg)" stroke-width="6.6" stroke-linecap="round"/>
<polyline points="786.7,645.5 791.8,644.9 797.7,644.3 804.3,643.7 811.2,642.9 818.2,642 824.7,641 830.7,639.9 835.7,638.9" fill="none" stroke="#101018" stroke-width="7.8999999999999995" stroke-linecap="round"/>
<polyline points="786.7,645.5 791.8,644.9 797.7,644.3 804.3,643.7 811.2,642.9 818.2,642 824.7,641 830.7,639.9 835.7,638.9" fill="none" stroke="url(#sprg)" stroke-width="6.6" stroke-linecap="round"/>
<polyline points="786.2,632.2 791.2,631.6 797.2,631 803.7,630.4 810.7,629.6 817.6,628.7 824.2,627.7 830.1,626.6 835.2,625.6" fill="none" stroke="#101018" stroke-width="7.8999999999999995" stroke-linecap="round"/>
<polyline points="786.2,632.2 791.2,631.6 797.2,631 803.7,630.4 810.7,629.6 817.6,628.7 824.2,627.7 830.1,626.6 835.2,625.6" fill="none" stroke="url(#sprg)" stroke-width="6.6" stroke-linecap="round"/>
<polyline points="785.6,618.9 790.7,618.3 796.6,617.7 803.2,617.1 810.1,616.3 817.1,615.4 823.6,614.4 829.6,613.3 834.6,612.3" fill="none" stroke="#101018" stroke-width="7.8999999999999995" stroke-linecap="round"/>
<polyline points="785.6,618.9 790.7,618.3 796.6,617.7 803.2,617.1 810.1,616.3 817.1,615.4 823.6,614.4 829.6,613.3 834.6,612.3" fill="none" stroke="url(#sprg)" stroke-width="6.6" stroke-linecap="round"/>
<polyline points="785.1,605.6 790.1,605 796,604.4 802.6,603.8 809.6,603 816.5,602.1 823.1,601.1 829,600 834.1,599" fill="none" stroke="#101018" stroke-width="7.8999999999999995" stroke-linecap="round"/>
<polyline points="785.1,605.6 790.1,605 796,604.4 802.6,603.8 809.6,603 816.5,602.1 823.1,601.1 829,600 834.1,599" fill="none" stroke="url(#sprg)" stroke-width="6.6" stroke-linecap="round"/>
<path d="M912.7,626.5 L943,624.5 L945,699 A15,2.5 0 0 1 915,701 Z" fill="url(#g5)" stroke="#000" stroke-width="0.9" stroke-linejoin="round" />
<ellipse cx="927.9" cy="625.5" rx="15.2" ry="2.4" fill="#6a6a30" stroke="#000" stroke-width="0.8" transform="rotate(-3.8 927.9 625.5)" />
<path d="M847,636.8 L913.3,631.6 L917.3,703 Q886,710 853,707.6 Z" fill="url(#g8)" stroke="none" stroke-width="0" stroke-linejoin="round" />
<polyline points="843.5,637 913.3,631.3" fill="none" stroke="#ff00ff" stroke-width="1.2" />
<polyline points="843.5,637 850.4,778.5" fill="none" stroke="#ff30ff" stroke-width="1" stroke-dasharray="4 3"/>
<polyline points="874.5,712 877,775" fill="none" stroke="#ff30ff" stroke-width="1" stroke-dasharray="4 3"/>
<polyline points="890,710 893,775" fill="none" stroke="#ff30ff" stroke-width="1" stroke-dasharray="4 3"/>
<polyline points="914,632 920,774" fill="none" stroke="#ff30ff" stroke-width="1" stroke-dasharray="4 3"/>
<polyline points="884,640 889,708" fill="none" stroke="#ff30ff" stroke-width="1" stroke-dasharray="4 3"/>
<path d="M850,777 Q885,781 920,774" fill="none" stroke="#ff30ff" stroke-width="1.2" stroke-linejoin="round" />
<path d="M850,777 Q885,771 920,774" fill="none" stroke="#ff30ff" stroke-width="0.8" stroke-linejoin="round" />
<path d="M942.5,609 L971,609 L974.5,706 A14.2,2.5 0 0 1 946,706 Z" fill="url(#g2)" stroke="#000" stroke-width="0.9" stroke-linejoin="round" />
<ellipse cx="956.8" cy="609" rx="14.2" ry="2" fill="url(#g2)" stroke="#000" stroke-width="0.8" />
<path d="M943.4,632.7 A14.2,2 0 0 0 971.9,632.7 L970.5,637.5 A14.2,2 0 0 1 945,637.5 Z" fill="url(#g7)" stroke="#000" stroke-width="0.9" stroke-linejoin="round" />
<path d="M944.4,662 A14.2,2 0 0 0 972.9,662 L971.6,667 A14.2,2 0 0 1 946.1,667 Z" fill="url(#g7)" stroke="#000" stroke-width="0.9" stroke-linejoin="round" />
<path d="M945.4,690 A14.2,2 0 0 0 973.9,690 L972.6,695.5 A14.2,2 0 0 1 947.1,695.5 Z" fill="url(#g7)" stroke="#000" stroke-width="0.9" stroke-linejoin="round" />
<polyline points="1029.5,698.9 1024.4,697.8 1018.5,696.7 1011.9,695.7 1005,694.8 998.1,694 991.5,693.4 985.6,692.8 980.5,692.2" fill="none" stroke="#20202c" stroke-width="7.8" stroke-linecap="butt"/>
<polyline points="1029.5,698.9 1024.4,697.8 1018.5,696.7 1011.9,695.7 1005,694.8 998.1,694 991.5,693.4 985.6,692.8 980.5,692.2" fill="none" stroke="url(#sprb)" stroke-width="6.6" stroke-linecap="butt"/>
<polyline points="1028.9,685.6 1023.9,684.5 1018,683.4 1011.4,682.4 1004.4,681.5 997.5,680.7 990.9,680.1 985,679.5 979.9,678.9" fill="none" stroke="#20202c" stroke-width="7.8" stroke-linecap="butt"/>
<polyline points="1028.9,685.6 1023.9,684.5 1018,683.4 1011.4,682.4 1004.4,681.5 997.5,680.7 990.9,680.1 985,679.5 979.9,678.9" fill="none" stroke="url(#sprb)" stroke-width="6.6" stroke-linecap="butt"/>
<polyline points="1028.4,672.3 1023.3,671.2 1017.4,670.1 1010.8,669.1 1003.9,668.2 997,667.4 990.4,666.8 984.5,666.2 979.4,665.6" fill="none" stroke="#20202c" stroke-width="7.8" stroke-linecap="butt"/>
<polyline points="1028.4,672.3 1023.3,671.2 1017.4,670.1 1010.8,669.1 1003.9,668.2 997,667.4 990.4,666.8 984.5,666.2 979.4,665.6" fill="none" stroke="url(#sprb)" stroke-width="6.6" stroke-linecap="butt"/>
<polyline points="1027.8,659 1022.8,657.9 1016.9,656.8 1010.3,655.8 1003.3,654.9 996.4,654.1 989.8,653.5 983.9,652.9 978.8,652.3" fill="none" stroke="#20202c" stroke-width="7.8" stroke-linecap="butt"/>
<polyline points="1027.8,659 1022.8,657.9 1016.9,656.8 1010.3,655.8 1003.3,654.9 996.4,654.1 989.8,653.5 983.9,652.9 978.8,652.3" fill="none" stroke="url(#sprb)" stroke-width="6.6" stroke-linecap="butt"/>
<polyline points="1027.3,645.7 1022.2,644.6 1016.3,643.5 1009.7,642.5 1002.8,641.6 995.9,640.8 989.3,640.2 983.4,639.6 978.3,639" fill="none" stroke="#20202c" stroke-width="7.8" stroke-linecap="butt"/>
<polyline points="1027.3,645.7 1022.2,644.6 1016.3,643.5 1009.7,642.5 1002.8,641.6 995.9,640.8 989.3,640.2 983.4,639.6 978.3,639" fill="none" stroke="url(#sprb)" stroke-width="6.6" stroke-linecap="butt"/>
<polyline points="1026.7,632.4 1021.7,631.3 1015.8,630.2 1009.2,629.2 1002.2,628.3 995.3,627.5 988.7,626.9 982.8,626.3 977.7,625.7" fill="none" stroke="#20202c" stroke-width="7.8" stroke-linecap="butt"/>
<polyline points="1026.7,632.4 1021.7,631.3 1015.8,630.2 1009.2,629.2 1002.2,628.3 995.3,627.5 988.7,626.9 982.8,626.3 977.7,625.7" fill="none" stroke="url(#sprb)" stroke-width="6.6" stroke-linecap="butt"/>
<polyline points="1026.2,619.1 1021.1,618 1015.2,616.9 1008.6,615.9 1001.7,615 994.8,614.2 988.2,613.6 982.2,613 977.2,612.4" fill="none" stroke="#20202c" stroke-width="7.8" stroke-linecap="butt"/>
<polyline points="1026.2,619.1 1021.1,618 1015.2,616.9 1008.6,615.9 1001.7,615 994.8,614.2 988.2,613.6 982.2,613 977.2,612.4" fill="none" stroke="url(#sprb)" stroke-width="6.6" stroke-linecap="butt"/>
<polyline points="1025.6,605.8 1020.6,604.7 1014.7,603.6 1008.1,602.6 1001.1,601.7 994.2,600.9 987.6,600.3 981.7,599.7 976.6,599.1" fill="none" stroke="#20202c" stroke-width="7.8" stroke-linecap="butt"/>
<polyline points="1025.6,605.8 1020.6,604.7 1014.7,603.6 1008.1,602.6 1001.1,601.7 994.2,600.9 987.6,600.3 981.7,599.7 976.6,599.1" fill="none" stroke="url(#sprb)" stroke-width="6.6" stroke-linecap="butt"/>
<polyline points="1025.1,592.5 1020,591.4 1014.1,590.3 1007.5,589.3 1000.6,588.4 993.6,587.6 987.1,587 981.1,586.4 976.1,585.8" fill="none" stroke="#20202c" stroke-width="7.8" stroke-linecap="butt"/>
<polyline points="1025.1,592.5 1020,591.4 1014.1,590.3 1007.5,589.3 1000.6,588.4 993.6,587.6 987.1,587 981.1,586.4 976.1,585.8" fill="none" stroke="url(#sprb)" stroke-width="6.6" stroke-linecap="butt"/>
<path d="M980,453.6 L1006.8,453.6 L1019,704 A13.5,2 0 0 1 992,704 Z" fill="url(#g4)" stroke="none" stroke-width="0.6" stroke-linejoin="round" />
<ellipse cx="993.4" cy="453.6" rx="13.4" ry="1.6" fill="url(#g4)" stroke="#000" stroke-width="0.8" />
<polyline points="980.5,705.5 985.6,704.9 991.5,704.3 998.1,703.7 1005,702.9 1011.9,702 1018.5,701 1024.4,699.9 1029.5,698.9" fill="none" stroke="#101018" stroke-width="7.8999999999999995" stroke-linecap="round"/>
<polyline points="980.5,705.5 985.6,704.9 991.5,704.3 998.1,703.7 1005,702.9 1011.9,702 1018.5,701 1024.4,699.9 1029.5,698.9" fill="none" stroke="url(#sprg)" stroke-width="6.6" stroke-linecap="round"/>
<polyline points="979.9,692.2 985,691.6 990.9,691 997.5,690.4 1004.4,689.6 1011.4,688.7 1018,687.7 1023.9,686.6 1028.9,685.6" fill="none" stroke="#101018" stroke-width="7.8999999999999995" stroke-linecap="round"/>
<polyline points="979.9,692.2 985,691.6 990.9,691 997.5,690.4 1004.4,689.6 1011.4,688.7 1018,687.7 1023.9,686.6 1028.9,685.6" fill="none" stroke="url(#sprg)" stroke-width="6.6" stroke-linecap="round"/>
<polyline points="979.4,678.9 984.5,678.3 990.4,677.7 997,677.1 1003.9,676.3 1010.8,675.4 1017.4,674.4 1023.3,673.3 1028.4,672.3" fill="none" stroke="#101018" stroke-width="7.8999999999999995" stroke-linecap="round"/>
<polyline points="979.4,678.9 984.5,678.3 990.4,677.7 997,677.1 1003.9,676.3 1010.8,675.4 1017.4,674.4 1023.3,673.3 1028.4,672.3" fill="none" stroke="url(#sprg)" stroke-width="6.6" stroke-linecap="round"/>
<polyline points="978.8,665.6 983.9,665 989.8,664.4 996.4,663.8 1003.3,663 1010.3,662.1 1016.9,661.1 1022.8,660 1027.8,659" fill="none" stroke="#101018" stroke-width="7.8999999999999995" stroke-linecap="round"/>
<polyline points="978.8,665.6 983.9,665 989.8,664.4 996.4,663.8 1003.3,663 1010.3,662.1 1016.9,661.1 1022.8,660 1027.8,659" fill="none" stroke="url(#sprg)" stroke-width="6.6" stroke-linecap="round"/>
<polyline points="978.3,652.3 983.4,651.7 989.3,651.1 995.9,650.5 1002.8,649.7 1009.7,648.8 1016.3,647.8 1022.2,646.7 1027.3,645.7" fill="none" stroke="#101018" stroke-width="7.8999999999999995" stroke-linecap="round"/>
<polyline points="978.3,652.3 983.4,651.7 989.3,651.1 995.9,650.5 1002.8,649.7 1009.7,648.8 1016.3,647.8 1022.2,646.7 1027.3,645.7" fill="none" stroke="url(#sprg)" stroke-width="6.6" stroke-linecap="round"/>
<polyline points="977.7,639 982.8,638.4 988.7,637.8 995.3,637.2 1002.2,636.4 1009.2,635.5 1015.8,634.5 1021.7,633.4 1026.7,632.4" fill="none" stroke="#101018" stroke-width="7.8999999999999995" stroke-linecap="round"/>
<polyline points="977.7,639 982.8,638.4 988.7,637.8 995.3,637.2 1002.2,636.4 1009.2,635.5 1015.8,634.5 1021.7,633.4 1026.7,632.4" fill="none" stroke="url(#sprg)" stroke-width="6.6" stroke-linecap="round"/>
<polyline points="977.2,625.7 982.2,625.1 988.2,624.5 994.8,623.9 1001.7,623.1 1008.6,622.2 1015.2,621.2 1021.1,620.1 1026.2,619.1" fill="none" stroke="#101018" stroke-width="7.8999999999999995" stroke-linecap="round"/>
<polyline points="977.2,625.7 982.2,625.1 988.2,624.5 994.8,623.9 1001.7,623.1 1008.6,622.2 1015.2,621.2 1021.1,620.1 1026.2,619.1" fill="none" stroke="url(#sprg)" stroke-width="6.6" stroke-linecap="round"/>
<polyline points="976.6,612.4 981.7,611.8 987.6,611.2 994.2,610.6 1001.1,609.8 1008.1,608.9 1014.7,607.9 1020.6,606.8 1025.6,605.8" fill="none" stroke="#101018" stroke-width="7.8999999999999995" stroke-linecap="round"/>
<polyline points="976.6,612.4 981.7,611.8 987.6,611.2 994.2,610.6 1001.1,609.8 1008.1,608.9 1014.7,607.9 1020.6,606.8 1025.6,605.8" fill="none" stroke="url(#sprg)" stroke-width="6.6" stroke-linecap="round"/>
<polyline points="976.1,599.1 981.1,598.5 987.1,597.9 993.6,597.3 1000.6,596.5 1007.5,595.6 1014.1,594.6 1020,593.5 1025.1,592.5" fill="none" stroke="#101018" stroke-width="7.8999999999999995" stroke-linecap="round"/>
<polyline points="976.1,599.1 981.1,598.5 987.1,597.9 993.6,597.3 1000.6,596.5 1007.5,595.6 1014.1,594.6 1020,593.5 1025.1,592.5" fill="none" stroke="url(#sprg)" stroke-width="6.6" stroke-linecap="round"/>
<path d="M928,275 L991,275 L994,338 L930,338 Z" fill="url(#g9)" stroke="none" stroke-width="0.6" stroke-linejoin="round" />
<path d="M590,283 L653,290 L659,450 A30.5,3.5 0 0 1 598,450 Z" fill="url(#g9)" stroke="none" stroke-width="0.6" stroke-linejoin="round" />
<polygon points="684,477 753,490 753,544 686,533" fill="#006499" stroke="#000" stroke-width="0.9" stroke-linejoin="round" />
<polygon points="683,452 696,455.5 696,479 684.5,477.5" fill="#d8d800" stroke="#000" stroke-width="0.9" stroke-linejoin="round" />
<polygon points="676,344 730,356 738,470 682,452" fill="#7f877f" stroke="#000" stroke-width="0.9" stroke-linejoin="round" />
<polygon points="730,410 835,403.5 841,430 898.5,422.6 901,398.6 997,392 1003,527 753,544 730,541" fill="#006499" stroke="#000" stroke-width="0.9" stroke-linejoin="round" />
<polyline points="745,464 1000.5,447.2" fill="none" stroke="#000" stroke-width="0.9" />
<polygon points="730,356 994,338 997,392 901,398.6 898.5,422.6 841,430 835,403.5 733,410" fill="#778077" stroke="#000" stroke-width="0.9" stroke-linejoin="round" />
<polygon points="676,344 940,325 994,338 730,356" fill="#6f786f" stroke="#000" stroke-width="0.9" stroke-linejoin="round" />
<ellipse cx="923" cy="327.5" rx="3" ry="0.8" fill="#111" stroke="none" stroke-width="0" transform="rotate(-4 923 327.5)" />
<ellipse cx="923.5" cy="327.5" rx="0.8" ry="0.5" fill="#e8e800" stroke="none" stroke-width="0" />
<ellipse cx="973" cy="338.3" rx="3" ry="0.8" fill="#111" stroke="none" stroke-width="0" transform="rotate(-4 973 338.3)" />
<ellipse cx="973.5" cy="338.3" rx="0.8" ry="0.5" fill="#e8e800" stroke="none" stroke-width="0" />
<ellipse cx="845" cy="289.3" rx="40" ry="2.4" fill="#5e5e2c" stroke="#000" stroke-width="0.8" transform="rotate(-3.5 845 289.3)" />
<path d="M834.5,291 L856,291 L857.5,341 A10.2,2.5 0 0 1 837,341 Z" fill="url(#g5)" stroke="none" stroke-width="0.6" stroke-linejoin="round" />
<polygon points="1026,398 1033,395 1040,397 1041,437 1028,437" fill="#d2d2d2" stroke="#000" stroke-width="0.9" stroke-linejoin="round" />
<polygon points="1028,437 1041,437 1044,478 1034,476 1029,468" fill="#9090b0" stroke="#000" stroke-width="0.9" stroke-linejoin="round" />
<ellipse cx="1030.5" cy="418" rx="1.6" ry="4" fill="#f2f2f2" stroke="#000" stroke-width="0.8" />
<ellipse cx="1031.5" cy="456" rx="1.6" ry="4" fill="#7c7c9c" stroke="#000" stroke-width="0.8" />
<polygon points="856,436 866.6,426 940,421.7 949,430.6 951,459 921.6,461.6 921.6,446.5 891.5,448 893,463.4 860,466 857.7,465" fill="#cbcbcb" stroke="#000" stroke-width="0.9" stroke-linejoin="round" />
<polygon points="856,436 866.6,426 868,428.5 859,437.5 860.5,465.5 857.7,465" fill="#e4e4e4" stroke="#000" stroke-width="0.9" stroke-linejoin="round" />
<polygon points="891.5,448 921.6,446.5 921.6,461.6 951,459 952.7,491 944.7,499 873.7,505 862,497 858.6,466.5 893,463.4" fill="#9090b2" stroke="#000" stroke-width="0.9" stroke-linejoin="round" />
<polygon points="862,497 873.7,505 875.5,502 864.5,494.5" fill="#5c5c74" stroke="#000" stroke-width="0.9" stroke-linejoin="round" />
<ellipse cx="876.4" cy="445.7" rx="9" ry="9.6" fill="#d8d8dc" stroke="#000" stroke-width="0.8" transform="rotate(-10 876.4 445.7)" />
<ellipse cx="875.9" cy="446" rx="6.6" ry="7.2" fill="#eeeeee" stroke="#000" stroke-width="0.8" transform="rotate(-10 875.9 446)" />
<ellipse cx="874.6" cy="446.5" rx="4.2" ry="4.8" fill="#006499" stroke="#000" stroke-width="0.8" transform="rotate(-10 874.6 446.5)" />
<ellipse cx="935.8" cy="441.2" rx="9" ry="9.6" fill="#d8d8dc" stroke="#000" stroke-width="0.8" transform="rotate(-10 935.8 441.2)" />
<ellipse cx="935.3" cy="441.5" rx="6.6" ry="7.2" fill="#eeeeee" stroke="#000" stroke-width="0.8" transform="rotate(-10 935.3 441.5)" />
<ellipse cx="934" cy="442" rx="4.2" ry="4.8" fill="#006499" stroke="#000" stroke-width="0.8" transform="rotate(-10 934 442)" />
<ellipse cx="878" cy="484.7" rx="9" ry="9.6" fill="#a0a0c0" stroke="#000" stroke-width="0.8" transform="rotate(-10 878 484.7)" />
<ellipse cx="877.5" cy="485" rx="6.6" ry="7.2" fill="#b8b8d0" stroke="#000" stroke-width="0.8" transform="rotate(-10 877.5 485)" />
<ellipse cx="876.2" cy="485.5" rx="4.2" ry="4.8" fill="#006499" stroke="#000" stroke-width="0.8" transform="rotate(-10 876.2 485.5)" />
<ellipse cx="937.6" cy="480.3" rx="9" ry="9.6" fill="#a0a0c0" stroke="#000" stroke-width="0.8" transform="rotate(-10 937.6 480.3)" />
<ellipse cx="937.1" cy="480.6" rx="6.6" ry="7.2" fill="#b8b8d0" stroke="#000" stroke-width="0.8" transform="rotate(-10 937.1 480.6)" />
<ellipse cx="935.8" cy="481.1" rx="4.2" ry="4.8" fill="#006499" stroke="#000" stroke-width="0.8" transform="rotate(-10 935.8 481.1)" />
<path d="M788,466 L815.5,466 L822,596 L794.4,596 Z" fill="url(#g4)" stroke="none" stroke-width="0.6" stroke-linejoin="round" />
<ellipse cx="801.8" cy="466" rx="13.8" ry="1.6" fill="url(#g4)" stroke="#000" stroke-width="0.8" />
<path d="M980,453.6 L1006.8,453.6 L1012.6,588 L986,588 Z" fill="url(#g4)" stroke="none" stroke-width="0.6" stroke-linejoin="round" />
<ellipse cx="993.4" cy="453.6" rx="13.4" ry="1.6" fill="url(#g4)" stroke="#000" stroke-width="0.8" />
<path d="M705.5,474 L749,474 L756.5,640 L713.5,641 Z" fill="url(#g1)" stroke="none" stroke-width="0.6" stroke-linejoin="round" />
<path d="M708.7,639.8 L709.5,652 A27,3.5 -4 0 0 762.8,647 L762,636 A27,3.5 -4 0 1 708.7,639.8 Z" fill="url(#g1)" stroke="#000" stroke-width="0.9" stroke-linejoin="round" />
<polyline points="708.7,639.8 722,642.6 737,642.2 752,639.4 762,636" fill="none" stroke="#000" stroke-width="0.9" />
<path d="M686,304 L750,304 L758,473 A31.5,4.5 0 0 1 695,473 Z" fill="url(#g9)" stroke="none" stroke-width="0.6" stroke-linejoin="round" />
<path d="M682,296 L682.5,309 A36,3.5 -3 0 0 754,305.5 L753.5,292 Z" fill="url(#g9)" stroke="none" stroke-width="0" stroke-linejoin="round" />
<path d="M682.5,309 A36,3.5 -3 0 0 754,305.5" fill="none" stroke="#000" stroke-width="0.9" stroke-linejoin="round" />
<path d="M1043,449 L1087.5,447 L1096,615 L1050.8,618 Z" fill="url(#g1)" stroke="none" stroke-width="0.6" stroke-linejoin="round" />
<path d="M1046,616.5 L1047,630 A27.5,3.5 -4 0 0 1101,628 L1100.8,613 A27.5,3.5 -4 0 1 1046,616.5 Z" fill="url(#g1)" stroke="#000" stroke-width="0.9" stroke-linejoin="round" />
<polyline points="1046,616.5 1060,619.6 1075,619.2 1090,616.4 1100.8,613" fill="none" stroke="#000" stroke-width="0.9" />
<path d="M1024,285 L1088.5,283 L1096.4,447 A31.2,4.5 0 0 1 1034,450 Z" fill="url(#g9)" stroke="none" stroke-width="0.6" stroke-linejoin="round" />
<path d="M1020,270 L1020.5,288 A36,3.5 -3 0 0 1092,284 L1091.5,266 Z" fill="url(#g9)" stroke="none" stroke-width="0" stroke-linejoin="round" />
<path d="M1020.5,288 A36,3.5 -3 0 0 1092,284" fill="none" stroke="#000" stroke-width="0.9" stroke-linejoin="round" />
<polygon points="618,423.5 627,421.5 648,421.8 663.6,425.5 636,426.5" fill="#dedede" stroke="#000" stroke-width="0.9" stroke-linejoin="round" />
<polygon points="636,426.5 663.6,425.5 664.6,434 637.6,435.5" fill="#e8e8e8" stroke="#000" stroke-width="0.9" stroke-linejoin="round" />
<polygon points="637.6,435.5 664.6,434 666,463 638.6,464.6" fill="#c9c9c9" stroke="#000" stroke-width="0.9" stroke-linejoin="round" />
<polygon points="638.6,464.6 666,463 667.6,495 640,497" fill="#9090b0" stroke="#000" stroke-width="0.9" stroke-linejoin="round" />
<polygon points="640,497 667.6,495 667,502 640,504.7" fill="#50506a" stroke="#000" stroke-width="0.9" stroke-linejoin="round" />
<polygon points="618,423.5 636,426.5 638.6,464.6 632,464 632,449 625,449 624.5,462.5 619,462" fill="#d6d6d6" stroke="#000" stroke-width="0.9" stroke-linejoin="round" />
<polygon points="619,462 624.5,462.5 625,449 632,449 632,464 638.6,464.6 640,504.7 627,502 621.5,497" fill="#9c9cb8" stroke="#000" stroke-width="0.9" stroke-linejoin="round" />
<ellipse cx="621" cy="443" rx="1.9" ry="9" fill="#f0f0f0" stroke="#000" stroke-width="0.8" transform="rotate(-3 621 443)" />
<ellipse cx="634.6" cy="446.6" rx="2" ry="8.6" fill="#f0f0f0" stroke="#000" stroke-width="0.8" transform="rotate(-3 634.6 446.6)" />
<ellipse cx="623" cy="482" rx="2.1" ry="9.6" fill="#8888a8" stroke="#000" stroke-width="0.8" transform="rotate(-3 623 482)" />
<ellipse cx="637" cy="485" rx="2.1" ry="9.2" fill="#8888a8" stroke="#000" stroke-width="0.8" transform="rotate(-3 637 485)" />
<polygon points="514,230 1035.5,195.5 1156,222.5 635,256" fill="#b5b5b5" stroke="#000" stroke-width="1" stroke-linejoin="round" />
<polygon points="514,230 635,256 636,301 516,274" fill="#c7c7c7" stroke="#000" stroke-width="1" stroke-linejoin="round" />
<polygon points="635,256 1156,222.5 1159.5,266 636,301" fill="#c8c8c8" stroke="#000" stroke-width="1" stroke-linejoin="round" />
<ellipse cx="630" cy="229.3" rx="20.5" ry="1.9" fill="#222" stroke="#000" stroke-width="0.8" transform="rotate(-3.5 630 229.3)" />
<ellipse cx="633" cy="229.2" rx="12" ry="1.1" fill="#fafafa" stroke="none" stroke-width="0" transform="rotate(-3.5 633 229.2)" />
<ellipse cx="692.5" cy="244.3" rx="20.5" ry="1.9" fill="#222" stroke="#000" stroke-width="0.8" transform="rotate(-3.5 692.5 244.3)" />
<ellipse cx="695.5" cy="244.2" rx="12" ry="1.1" fill="#fafafa" stroke="none" stroke-width="0" transform="rotate(-3.5 695.5 244.2)" />
<ellipse cx="979" cy="206.4" rx="20.5" ry="1.9" fill="#222" stroke="#000" stroke-width="0.8" transform="rotate(-3.5 979 206.4)" />
<ellipse cx="982" cy="206.3" rx="12" ry="1.1" fill="#fafafa" stroke="none" stroke-width="0" transform="rotate(-3.5 982 206.3)" />
<ellipse cx="1041" cy="221" rx="20.5" ry="1.9" fill="#222" stroke="#000" stroke-width="0.8" transform="rotate(-3.5 1041 221)" />
<ellipse cx="1044" cy="220.9" rx="12" ry="1.1" fill="#fafafa" stroke="none" stroke-width="0" transform="rotate(-3.5 1044 220.9)" />
<path d="M751.5,214.6 L752,231.6 A89.4,7 -3.3 0 0 931,222.8 L930,204.2 Z" fill="url(#g10)" stroke="#000" stroke-width="0.9" stroke-linejoin="round" />
<ellipse cx="840.8" cy="209.4" rx="89.4" ry="7" fill="#006a6a" stroke="#000" stroke-width="0.9" transform="rotate(-3.3 840.8 209.4)" />
<ellipse cx="842" cy="209.2" rx="80" ry="5.9" fill="#005c5c" stroke="#001c1c" stroke-width="1" transform="rotate(-3.3 842 209.2)" />
<ellipse cx="843" cy="209.7" rx="70" ry="4.8" fill="#007070" stroke="#001c1c" stroke-width="1" transform="rotate(-3.3 843 209.7)" />
<ellipse cx="846" cy="209.4" rx="54" ry="3.2" fill="#005e5e" stroke="#002020" stroke-width="0.8" transform="rotate(-3.3 846 209.4)" />
<ellipse cx="850" cy="209.3" rx="40" ry="2" fill="#007878" stroke="none" stroke-width="0" transform="rotate(-3.3 850 209.3)" />
<g opacity="0.92"><g fill="none" stroke="#f08a1c" stroke-width="1.6"><path d="M892.5,514v23 M896,511v26 M900,509v28 M903.5,514v21 M923,514v21 M926.5,509v28 M930.5,511v26 M934,514v23"/><path d="M891.5,537.5 h20 l2.5,2 l2.5,-2 h19" stroke-width="1.3"/><path d="M907,515 a8,9 0 1 0 13,1" stroke-width="2.4"/><path d="M915,511 q-5,8 -1,13 q3,4 -2,9" stroke-width="2.2" stroke="#f5a020"/></g>
<text x="946" y="529" font-family="'Liberation Sans','Noto Sans CJK SC',sans-serif" font-size="16.6" font-weight="bold" fill="#f08a1c">智造资料网</text>
<text x="946.5" y="538.6" font-family="'Liberation Sans',sans-serif" font-size="4.7" font-weight="bold" fill="#f08a1c" textLength="82" lengthAdjust="spacingAndGlyphs">INTELLIGENT MANUFACTURING DATA</text></g>
<polygon points="93.2,917.3 112,917.3 112.5,916 124,916 125.3,917.3 126,943.6 94,943.6" fill="rgba(190,200,220,0.28)" stroke="#c8c8c8" stroke-width="0.9" stroke-linejoin="round" />
<polyline points="119.5,941 116.2,876" fill="none" stroke="#00e8e8" stroke-width="2.2" />
<polygon points="116,867.5 112.3,878 119.8,877.6" fill="#00f4f4" stroke="none" stroke-width="0" stroke-linejoin="round" />
<polyline points="119.5,942.3 95,943.2" fill="none" stroke="#e00000" stroke-width="2.6" />
<polyline points="97,945 124,944.3" fill="none" stroke="#f0e000" stroke-width="1" />
<polygon points="86.3,944.3 96.5,940 96.5,948" fill="#f00000" stroke="none" stroke-width="0" stroke-linejoin="round" />
<ellipse cx="119.5" cy="942" rx="3.6" ry="3.6" fill="#707070" stroke="none" stroke-width="0" />
<ellipse cx="128.6" cy="943.8" rx="3.6" ry="4.2" fill="#00c800" stroke="none" stroke-width="0" />
<g font-family="'Liberation Sans',sans-serif" font-size="11.5" fill="#d4d4d4"><text x="110.5" y="864">Z</text><text x="74.5" y="949">X</text><text x="128" y="949.5" font-size="10.5">Y</text></g></svg>
<div id="status" class="abs">
<div class="hline"></div>
<div class="vdot" style="left:1337px;top:3px"></div>
<div class="abs" style="left:1341px;top:2px;width:131px;height:17px;background:#fff"></div>
<div class="vdot" style="left:1475px;top:3px"></div><div class="vdot" style="left:1478px;top:4px"></div>
<span class="st" style="left:1486px;top:3px;letter-spacing:0.06px">绝对 XY 上视图</span>
<i class="vs" style="left:1592px;top:3px"></i>
<span class="st" style="left:1601px;top:3px">绝对视图</span>
<div class="vdot" style="left:1656px;top:3px"></div>
<span class="st" style="left:1668px;top:3px;font-weight:bold;font-size:12px">LAYER0</span>
<i class="vs" style="left:1726px;top:3px"></i><i class="vs" style="left:1757px;top:3px"></i>
<div class="abs" style="left:1762px;top:5px;width:32px;height:12px;background:#44628b"></div>
<i class="vs" style="left:1799px;top:3px"></i>
<div class="abs" style="left:1805px;top:5px;width:32px;height:12px;background:#44628b"></div>
<i class="vs" style="left:1842px;top:3px"></i>
<div class="abs" style="left:1848px;top:5px;width:32px;height:12px;background:#44628b"></div>
<i class="vs" style="left:1886px;top:3px"></i>
<i class="vs" style="left:1132px;top:23px"></i>
<span class="st" style="left:1141px;top:23px">拴牢</span>
<i class="vs" style="left:1175px;top:23px"></i><i class="vs" style="left:1206px;top:23px"></i><i class="vs" style="left:1237px;top:23px"></i><i class="vs" style="left:1268px;top:23px"></i><i class="vs" style="left:1299px;top:23px"></i><i class="vs" style="left:1330px;top:23px"></i><i class="vs" style="left:1361px;top:23px"></i>
<span class="st" style="left:1463px;top:23px;letter-spacing:-0.06px">LS: 1.00 PS: 1.00</span>
<i class="vs" style="left:1579px;top:23px"></i>
<span class="st" style="left:1589px;top:23px">单位: 毫米</span>
<i class="vs" style="left:1654px;top:23px"></i>
<span class="st" style="left:1663px;top:23px;letter-spacing:0.43px">X = 0380.090 Y = 1772.379 Z = 0000.000</span>
</div>
<div id="task" class="abs"><div class="abs" style="left:48px;top:0;width:344px;height:8px;background:#f2f2f2"></div><div class="abs" style="left:687px;top:0;width:44px;height:8px;background:#505050"></div><div class="abs" style="left:730px;top:0;width:2px;height:8px;background:#707070"></div><span class="abs" style="left:1813px;top:2px;color:#fff;font-size:12px;line-height:14px">14:47</span></div>
<svg class="abs" id="icons" style="left:0;top:0" width="1920" height="1048" viewBox="0 0 1920 1048"><defs><filter id="ol" x="-30%" y="-30%" width="160%" height="160%"><feMorphology in="SourceAlpha" operator="dilate" radius="1" result="d"/><feFlood flood-color="#9a5c18"/><feComposite in2="d" operator="in" result="o"/><feMerge><feMergeNode in="o"/><feMergeNode in="SourceGraphic"/></feMerge></filter><linearGradient id="ib" x1="0" x2="1" y1="0" y2="0"><stop offset="0" stop-color="#2a4a9c"/><stop offset="0.45" stop-color="#86aef0"/><stop offset="1" stop-color="#1e3a86"/></linearGradient><linearGradient id="il" x1="0" x2="1" y1="0" y2="0"><stop offset="0" stop-color="#a8b8dc"/><stop offset="0.45" stop-color="#eef2fc"/><stop offset="1" stop-color="#9aa8cc"/></linearGradient><linearGradient id="ig" x1="0" x2="0" y1="0" y2="1"><stop offset="0" stop-color="#fafcff"/><stop offset="1" stop-color="#a8c4f0"/></linearGradient><radialGradient id="ism" cx="0.4" cy="0.35" r="0.7"><stop offset="0" stop-color="#fff0a0"/><stop offset="1" stop-color="#e0a010"/></radialGradient><linearGradient id="ifo" x1="0" x2="0" y1="0" y2="1"><stop offset="0" stop-color="#ffe890"/><stop offset="1" stop-color="#e0a828"/></linearGradient><linearGradient id="igr" x1="0" x2="1" y1="0" y2="1"><stop offset="0" stop-color="#c8c8c8"/><stop offset="1" stop-color="#606060"/></linearGradient><symbol id="i_cylw" viewBox="0 0 24 24"><path d="M6.5,5.5 V19 A5.5,2 0 0 0 17.5,19 V5.5 Z" fill="none" stroke="#222" stroke-width="1"/><ellipse cx="12" cy="5.5" rx="5.5" ry="2.3" fill="none" stroke="#222" stroke-width="0.85"/><path d="M6.5,19 A5.5,2 0 0 1 17.5,19" fill="none" stroke="#555" stroke-width="0.7"/></symbol><symbol id="i_cylw2" viewBox="0 0 24 24"><path d="M6.5,5.5 V19 A5.5,2 0 0 0 17.5,19 V5.5 Z" fill="none" stroke="#222" stroke-width="1"/><ellipse cx="12" cy="5.5" rx="5.5" ry="2.3" fill="none" stroke="#222" stroke-width="0.85"/></symbol><symbol id="i_cylbc" viewBox="0 0 24 24"><ellipse cx="15" cy="20.6" rx="7" ry="1.6" fill="#555" opacity="0.45"/><path d="M6.5,5.5 V19 A5.5,2 0 0 0 17.5,19 V5.5 Z" fill="url(#ib)" stroke="#20d8f0" stroke-width="1.2"/><ellipse cx="12" cy="5.5" rx="5.5" ry="2.3" fill="#5f86d8" stroke="#20d8f0" stroke-width="1.2"/></symbol><symbol id="i_cylb" viewBox="0 0 24 24"><ellipse cx="15" cy="20.6" rx="7" ry="1.6" fill="#555" opacity="0.45"/><path d="M6.5,5.5 V19 A5.5,2 0 0 0 17.5,19 V5.5 Z" fill="url(#ib)" stroke="#18285c" stroke-width="1"/><ellipse cx="12" cy="5.5" rx="5.5" ry="2.3" fill="#5478c8" stroke="#18285c" stroke-width="1"/></symbol><symbol id="i_cyllc" viewBox="0 0 24 24"><ellipse cx="15" cy="20.6" rx="7" ry="1.6" fill="#555" opacity="0.45"/><path d="M6.5,5.5 V19 A5.5,2 0 0 0 17.5,19 V5.5 Z" fill="url(#il)" stroke="#40e0f0" stroke-width="1.2"/><ellipse cx="12" cy="5.5" rx="5.5" ry="2.3" fill="#e8eefc" stroke="#40e0f0" stroke-width="1.2"/><path d="M6.5,16 A5.5,2 0 0 0 17.5,16" fill="none" stroke="#40e0f0" stroke-width="0.7"/></symbol><symbol id="i_cyll" viewBox="0 0 24 24"><ellipse cx="15" cy="20.6" rx="7" ry="1.6" fill="#555" opacity="0.45"/><path d="M6.5,5.5 V19 A5.5,2 0 0 0 17.5,19 V5.5 Z" fill="url(#il)" stroke="#5a6890" stroke-width="1"/><ellipse cx="12" cy="5.5" rx="5.5" ry="2.3" fill="#dfe6f8" stroke="#5a6890" stroke-width="1"/><path d="M6.5,16 A5.5,2 0 0 0 17.5,16" fill="none" stroke="#7a88b0" stroke-width="0.7"/></symbol><symbol id="i_cylh" viewBox="0 0 24 24"><path d="M6.5,5.5 V19 A5.5,2 0 0 0 17.5,19 V5.5 Z" fill="#f4f4f4" stroke="#222" stroke-width="1"/><ellipse cx="12" cy="5.5" rx="5.5" ry="2.3" fill="#e0e0e0" stroke="#222" stroke-width="1"/><path d="M8.5,7.5 L10.5,20 M11,8 L9.5,20.5 M13,8 L15,20.5 M15.5,7.5 L13,20.5" stroke="#333" stroke-width="0.7" fill="none"/></symbol><symbol id="i_cylhb" viewBox="0 0 24 24"><path d="M6.5,5.5 V19 A5.5,2 0 0 0 17.5,19 V5.5 Z" fill="#e4eefc" stroke="#6aa0e8" stroke-width="1"/><ellipse cx="12" cy="5.5" rx="5.5" ry="2.3" fill="#d0e0fa" stroke="#6aa0e8" stroke-width="1"/><path d="M8.5,7.5 L10.5,20 M11,8 L9.5,20.5 M13,8 L15,20.5 M15.5,7.5 L13,20.5" stroke="#5a90e0" stroke-width="0.7" fill="none"/></symbol><symbol id="i_cyld" viewBox="0 0 24 24"><ellipse cx="15" cy="20.6" rx="7" ry="1.6" fill="#555" opacity="0.45"/><path d="M6.5,5.5 V19 A5.5,2 0 0 0 17.5,19 V5.5 Z" fill="url(#ib)" stroke="#18285c" stroke-width="1"/><ellipse cx="12" cy="5.5" rx="5.5" ry="2.3" fill="#5478c8" stroke="#18285c" stroke-width="1"/><path d="M12,9 V20" stroke="#101a40" stroke-width="1.2" stroke-dasharray="2.2 1.6"/></symbol><symbol id="i_cyly" viewBox="0 0 24 24"><ellipse cx="15" cy="20.6" rx="7" ry="1.6" fill="#555" opacity="0.45"/><path d="M6.5,5.5 V19 A5.5,2 0 0 0 17.5,19 V5.5 Z" fill="url(#il)" stroke="#3a4a78" stroke-width="1"/><ellipse cx="12" cy="5.5" rx="5.5" ry="2.3" fill="#8aa0d8" stroke="#3a4a78" stroke-width="1"/><path d="M10,8 V20.5 M14,8 V20.5" stroke="#e8d820" stroke-width="1.5"/></symbol><symbol id="i_cylck" viewBox="0 0 24 24"><ellipse cx="15" cy="20.6" rx="7" ry="1.6" fill="#555" opacity="0.45"/><path d="M6.5,5.5 V19 A5.5,2 0 0 0 17.5,19 V5.5 Z" fill="url(#il)" stroke="#40e0f0" stroke-width="1.2"/><ellipse cx="12" cy="5.5" rx="5.5" ry="2.3" fill="#e8eefc" stroke="#40e0f0" stroke-width="1.2"/><path d="M8.5,13 L11.5,17.5 L17,8.5" fill="none" stroke="#28b428" stroke-width="2.6"/></symbol><symbol id="i_cylsq" viewBox="0 0 24 24"><ellipse cx="15" cy="20.6" rx="7" ry="1.6" fill="#555" opacity="0.45"/><path d="M6.5,5.5 V19 A5.5,2 0 0 0 17.5,19 V5.5 Z" fill="url(#il)" stroke="#40e0f0" stroke-width="1.2"/><ellipse cx="12" cy="5.5" rx="5.5" ry="2.3" fill="#e8eefc" stroke="#40e0f0" stroke-width="1.2"/><path d="M6.5,16 A5.5,2 0 0 0 17.5,16" fill="none" stroke="#40e0f0" stroke-width="0.7"/><rect x="15" y="2" width="5" height="5" fill="#f8d8a0" stroke="#e08820" stroke-width="1.2"/></symbol><symbol id="i_refb" viewBox="0 0 24 24"><path d="M4,11 A8,7 0 0 1 18,6.5 L20,4.5 V11 H13.5 L15.8,8.7 A5,4.5 0 0 0 7,11 Z" fill="#7aa8e8" stroke="#3468b8" stroke-width="0.7"/><path d="M20,13 A8,7 0 0 1 6,17.5 L4,19.5 V13 H10.5 L8.2,15.3 A5,4.5 0 0 0 17,13 Z" fill="#5a90dc" stroke="#3468b8" stroke-width="0.7"/></symbol><symbol id="i_refg" viewBox="0 0 24 24"><path d="M4,11 A8,7 0 0 1 18,6.5 L20,4.5 V11 H13.5 L15.8,8.7 A5,4.5 0 0 0 7,11 Z" fill="#38c038" stroke="#188018" stroke-width="0.7"/><path d="M20,13 A8,7 0 0 1 6,17.5 L4,19.5 V13 H10.5 L8.2,15.3 A5,4.5 0 0 0 17,13 Z" fill="#30b030" stroke="#188018" stroke-width="0.7"/></symbol><symbol id="i_refgy" viewBox="0 0 24 24"><path d="M4,11 A8,7 0 0 1 18,6.5 L20,4.5 V11 H13.5 L15.8,8.7 A5,4.5 0 0 0 7,11 Z" fill="#48c030" stroke="#208020" stroke-width="0.7"/><path d="M20,13 A8,7 0 0 1 6,17.5 L4,19.5 V13 H10.5 L8.2,15.3 A5,4.5 0 0 0 17,13 Z" fill="#e8d020" stroke="#a89010" stroke-width="0.7"/></symbol><symbol id="i_eyepu" viewBox="0 0 24 24"><path d="M3,9.5 Q12,1.5 21,9.5 Q12,14 3,9.5 Z" fill="#a4aec8" stroke="#4a5678" stroke-width="1"/><circle cx="12" cy="8.3" r="3.4" fill="#3c5a9c"/><circle cx="12" cy="8.3" r="1.5" fill="#101830"/><path d="M3,9 Q12,0 21,9" fill="none" stroke="#2a3450" stroke-width="1.6"/><path d="M5,5.5 L4,3.5 M8,3.6 L7.4,1.6 M12,2.8 V0.8 M16,3.6 L16.6,1.6 M19,5.5 L20,3.5" stroke="#2a3450" stroke-width="0.8"/><path d="M3,15.5 h7 M6.5,12 v7" stroke="#30c030" stroke-width="2.4"/><path d="M13,20 Q20,21 20,16.5 Q20,13.5 15,13.8 M17,11.8 L14.5,14 L17.4,16" fill="none" stroke="#2858c0" stroke-width="1.5"/></symbol><symbol id="i_eyemu" viewBox="0 0 24 24"><path d="M3,9.5 Q12,1.5 21,9.5 Q12,14 3,9.5 Z" fill="#a4aec8" stroke="#4a5678" stroke-width="1"/><circle cx="12" cy="8.3" r="3.4" fill="#3c5a9c"/><circle cx="12" cy="8.3" r="1.5" fill="#101830"/><path d="M3,9 Q12,0 21,9" fill="none" stroke="#2a3450" stroke-width="1.6"/><path d="M5,5.5 L4,3.5 M8,3.6 L7.4,1.6 M12,2.8 V0.8 M16,3.6 L16.6,1.6 M19,5.5 L20,3.5" stroke="#2a3450" stroke-width="0.8"/><path d="M4,17 h7" stroke="#e8d000" stroke-width="2.4"/><path d="M13,20 Q20,21 20,16.5 Q20,13.5 15,13.8 M17,11.8 L14.5,14 L17.4,16" fill="none" stroke="#2858c0" stroke-width="1.5"/></symbol><symbol id="i_eyetr" viewBox="0 0 24 24"><g transform="translate(0,-1)"><path d="M3,9.5 Q12,1.5 21,9.5 Q12,14 3,9.5 Z" fill="#a4aec8" stroke="#4a5678" stroke-width="1"/><circle cx="12" cy="8.3" r="3.4" fill="#3c5a9c"/><circle cx="12" cy="8.3" r="1.5" fill="#101830"/><path d="M3,9 Q12,0 21,9" fill="none" stroke="#2a3450" stroke-width="1.6"/><path d="M5,5.5 L4,3.5 M8,3.6 L7.4,1.6 M12,2.8 V0.8 M16,3.6 L16.6,1.6 M19,5.5 L20,3.5" stroke="#2a3450" stroke-width="0.8"/></g><rect x="4" y="8" width="6" height="13" rx="2" fill="#181818"/><rect x="14" y="8" width="6" height="13" rx="2" fill="#181818"/><circle cx="7" cy="12" r="2" fill="#f0c800"/><circle cx="7" cy="17.5" r="2" fill="#20d020"/><circle cx="17" cy="12" r="2" fill="#f02020"/><circle cx="17" cy="17.5" r="2" fill="#f0c800"/></symbol><symbol id="i_eyerf" viewBox="0 0 24 24"><path d="M3,9.5 Q12,1.5 21,9.5 Q12,14 3,9.5 Z" fill="#a4aec8" stroke="#4a5678" stroke-width="1"/><circle cx="12" cy="8.3" r="3.4" fill="#3c5a9c"/><circle cx="12" cy="8.3" r="1.5" fill="#101830"/><path d="M3,9 Q12,0 21,9" fill="none" stroke="#2a3450" stroke-width="1.6"/><path d="M5,5.5 L4,3.5 M8,3.6 L7.4,1.6 M12,2.8 V0.8 M16,3.6 L16.6,1.6 M19,5.5 L20,3.5" stroke="#2a3450" stroke-width="0.8"/><g transform="translate(3,9) scale(0.75,0.62)"><path d="M4,11 A8,7 0 0 1 18,6.5 L20,4.5 V11 H13.5 L15.8,8.7 A5,4.5 0 0 0 7,11 Z" fill="#48c030" stroke="#208020" stroke-width="0.7"/><path d="M20,13 A8,7 0 0 1 6,17.5 L4,19.5 V13 H10.5 L8.2,15.3 A5,4.5 0 0 0 17,13 Z" fill="#e8d020" stroke="#a89010" stroke-width="0.7"/></g></symbol><symbol id="i_eyepm" viewBox="0 0 24 24"><path d="M3,9.5 Q12,1.5 21,9.5 Q12,14 3,9.5 Z" fill="#a4aec8" stroke="#4a5678" stroke-width="1"/><circle cx="12" cy="8.3" r="3.4" fill="#3c5a9c"/><circle cx="12" cy="8.3" r="1.5" fill="#101830"/><path d="M3,9 Q12,0 21,9" fill="none" stroke="#2a3450" stroke-width="1.6"/><path d="M5,5.5 L4,3.5 M8,3.6 L7.4,1.6 M12,2.8 V0.8 M16,3.6 L16.6,1.6 M19,5.5 L20,3.5" stroke="#2a3450" stroke-width="0.8"/><path d="M2,14.5 h7 M5.5,11 v7" stroke="#30c030" stroke-width="2.4"/><path d="M9,21 L15,12" stroke="#222" stroke-width="1.1"/><path d="M13,20 h7" stroke="#e8d000" stroke-width="2.4"/></symbol><symbol id="i_eyep" viewBox="0 0 24 24"><path d="M3,9.5 Q12,1.5 21,9.5 Q12,14 3,9.5 Z" fill="#a4aec8" stroke="#4a5678" stroke-width="1"/><circle cx="12" cy="8.3" r="3.4" fill="#3c5a9c"/><circle cx="12" cy="8.3" r="1.5" fill="#101830"/><path d="M3,9 Q12,0 21,9" fill="none" stroke="#2a3450" stroke-width="1.6"/><path d="M5,5.5 L4,3.5 M8,3.6 L7.4,1.6 M12,2.8 V0.8 M16,3.6 L16.6,1.6 M19,5.5 L20,3.5" stroke="#2a3450" stroke-width="0.8"/><path d="M8,16.5 h7 M11.5,13 v7" stroke="#30c030" stroke-width="2.4"/></symbol><symbol id="i_eyem" viewBox="0 0 24 24"><path d="M3,9.5 Q12,1.5 21,9.5 Q12,14 3,9.5 Z" fill="#a4aec8" stroke="#4a5678" stroke-width="1"/><circle cx="12" cy="8.3" r="3.4" fill="#3c5a9c"/><circle cx="12" cy="8.3" r="1.5" fill="#101830"/><path d="M3,9 Q12,0 21,9" fill="none" stroke="#2a3450" stroke-width="1.6"/><path d="M5,5.5 L4,3.5 M8,3.6 L7.4,1.6 M12,2.8 V0.8 M16,3.6 L16.6,1.6 M19,5.5 L20,3.5" stroke="#2a3450" stroke-width="0.8"/><path d="M8,16 h9" stroke="#e8d000" stroke-width="2.4"/></symbol><symbol id="i_cubpu" viewBox="0 0 24 24"><g stroke="#444" stroke-width="0.6"><path d="M2,6 l5,-2.5 l5,2 v6 l-5,2.5 l-5,-2 Z" fill="#b0b0b0"/><path d="M2,6 l5,2 l5,-2.5 M7,8 v6" fill="none"/><path d="M12,5 l5,-2.5 l5,2 v6 l-5,2.5 l-5,-2 Z" fill="#f0f0f0"/><path d="M12,5 l5,2 l5,-2.5 M17,7 v6" fill="none"/><path d="M7,4 l5,-2.5 l5,2 l-5,2.5 Z" fill="#d8d8d8"/></g><path d="M2,15.5 h7 M5.5,12 v7" stroke="#30c030" stroke-width="2.4"/><path d="M13,20 Q20,21 20,16.5 Q20,13.5 15,13.8 M17,11.8 L14.5,14 L17.4,16" fill="none" stroke="#2858c0" stroke-width="1.5"/></symbol><symbol id="i_cubtr" viewBox="0 0 24 24"><g stroke="#444" stroke-width="0.6"><path d="M2,6 l5,-2.5 l5,2 v6 l-5,2.5 l-5,-2 Z" fill="#b0b0b0"/><path d="M2,6 l5,2 l5,-2.5 M7,8 v6" fill="none"/><path d="M12,5 l5,-2.5 l5,2 v6 l-5,2.5 l-5,-2 Z" fill="#f0f0f0"/><path d="M12,5 l5,2 l5,-2.5 M17,7 v6" fill="none"/><path d="M7,4 l5,-2.5 l5,2 l-5,2.5 Z" fill="#d8d8d8"/></g><rect x="4" y="8" width="6" height="13" rx="2" fill="#181818"/><rect x="14" y="8" width="6" height="13" rx="2" fill="#181818"/><circle cx="7" cy="12" r="2" fill="#f0c800"/><circle cx="7" cy="17.5" r="2" fill="#20d020"/><circle cx="17" cy="12" r="2" fill="#f02020"/><circle cx="17" cy="17.5" r="2" fill="#f0c800"/></symbol><symbol id="i_cubrf" viewBox="0 0 24 24"><g stroke="#444" stroke-width="0.6"><path d="M2,6 l5,-2.5 l5,2 v6 l-5,2.5 l-5,-2 Z" fill="#b0b0b0"/><path d="M2,6 l5,2 l5,-2.5 M7,8 v6" fill="none"/><path d="M12,5 l5,-2.5 l5,2 v6 l-5,2.5 l-5,-2 Z" fill="#f0f0f0"/><path d="M12,5 l5,2 l5,-2.5 M17,7 v6" fill="none"/><path d="M7,4 l5,-2.5 l5,2 l-5,2.5 Z" fill="#d8d8d8"/></g><g transform="translate(3,8) scale(0.8,0.68)"><path d="M4,11 A8,7 0 0 1 18,6.5 L20,4.5 V11 H13.5 L15.8,8.7 A5,4.5 0 0 0 7,11 Z" fill="#48c030" stroke="#208020" stroke-width="0.7"/><path d="M20,13 A8,7 0 0 1 6,17.5 L4,19.5 V13 H10.5 L8.2,15.3 A5,4.5 0 0 0 17,13 Z" fill="#e8d020" stroke="#a89010" stroke-width="0.7"/></g></symbol><symbol id="i_cubpm" viewBox="0 0 24 24"><g stroke="#444" stroke-width="0.6"><path d="M2,6 l5,-2.5 l5,2 v6 l-5,2.5 l-5,-2 Z" fill="#b0b0b0"/><path d="M2,6 l5,2 l5,-2.5 M7,8 v6" fill="none"/><path d="M12,5 l5,-2.5 l5,2 v6 l-5,2.5 l-5,-2 Z" fill="#f0f0f0"/><path d="M12,5 l5,2 l5,-2.5 M17,7 v6" fill="none"/><path d="M7,4 l5,-2.5 l5,2 l-5,2.5 Z" fill="#d8d8d8"/></g><path d="M2,14.5 h7 M5.5,11 v7" stroke="#30c030" stroke-width="2.4"/><path d="M9,21 L15,12" stroke="#222" stroke-width="1.1"/><path d="M14,20 h7" stroke="#e8d000" stroke-width="2.4"/></symbol><symbol id="i_gem" viewBox="0 0 24 24"><path d="M3,7 L12,3.5 L21,7 L19,15 L12,21 L5,15 Z" fill="#1c3c90" stroke="#0c1c50" stroke-width="0.8"/><path d="M3,7 L12,10 L21,7 L12,3.5 Z" fill="#5a88e0"/><path d="M12,10 V21 L19,15 L21,7 Z" fill="#14286c"/></symbol><symbol id="i_magpm" viewBox="0 0 24 24"><path d="M14,13 h7 v8 h-7 Z" fill="#686868" stroke="#333" stroke-width="0.6"/><path d="M14,13 l2,-2 h7 l-2,2 Z" fill="#a0a0a0" stroke="#333" stroke-width="0.5"/><path d="M21,13 l2,-2 v8 l-2,2 Z" fill="#484848" stroke="#333" stroke-width="0.5"/><circle cx="13" cy="9" r="5.5" fill="#d8e6f8" stroke="#788498" stroke-width="1.6"/><path d="M9.15,12.85 L4,19" stroke="#8a8a8a" stroke-width="2.6" stroke-linecap="round"/><path d="M11.5,6 l4,3 l-4,3 Z" fill="#b8c8e0" stroke="#8090b0" stroke-width="0.5"/><path d="M2,4 h5 M4.5,1.5 v5 M2,8.5 h5" stroke="#111" stroke-width="1"/></symbol><symbol id="i_magfit" viewBox="0 0 24 24"><path d="M14,13 h7 v8 h-7 Z" fill="#686868" stroke="#333" stroke-width="0.6"/><path d="M14,13 l2,-2 h7 l-2,2 Z" fill="#a0a0a0" stroke="#333" stroke-width="0.5"/><path d="M21,13 l2,-2 v8 l-2,2 Z" fill="#484848" stroke="#333" stroke-width="0.5"/><circle cx="13" cy="9" r="5.5" fill="#d8e6f8" stroke="#788498" stroke-width="1.6"/><path d="M9.15,12.85 L4,19" stroke="#8a8a8a" stroke-width="2.6" stroke-linecap="round"/><path d="M11.5,6 l4,3 l-4,3 Z" fill="#b8c8e0" stroke="#8090b0" stroke-width="0.5"/><rect x="2" y="2" width="4" height="4" fill="#30c030" stroke="#108010" stroke-width="0.5"/><rect x="19" y="2" width="4" height="4" fill="#30c030" stroke="#108010" stroke-width="0.5"/><rect x="2" y="19" width="4" height="4" fill="#30c030" stroke="#108010" stroke-width="0.5"/><rect x="19" y="19" width="4" height="4" fill="#30c030" stroke="#108010" stroke-width="0.5"/></symbol><symbol id="i_one" viewBox="0 0 24 24"><rect x="4.5" y="5" width="15" height="14" fill="url(#ig)" stroke="#222" stroke-width="1"/><rect x="2.5" y="3" width="4" height="4" fill="#30c030" stroke="#108010" stroke-width="0.5"/><rect x="17.5" y="3" width="4" height="4" fill="#30c030" stroke="#108010" stroke-width="0.5"/><rect x="2.5" y="17" width="4" height="4" fill="#30c030" stroke="#108010" stroke-width="0.5"/><rect x="17.5" y="17" width="4" height="4" fill="#30c030" stroke="#108010" stroke-width="0.5"/><path d="M9,9 v6 M8,10 l1,-1 M15,9 v6 M14,10 l1,-1" stroke="#111" stroke-width="1.2" fill="none"/><circle cx="12" cy="10.5" r="0.8"/><circle cx="12" cy="14" r="0.8"/></symbol><symbol id="i_fit" viewBox="0 0 24 24"><rect x="4.5" y="5" width="15" height="14" fill="url(#ig)" stroke="#222" stroke-width="1"/><rect x="2.5" y="3" width="4" height="4" fill="#30c030" stroke="#108010" stroke-width="0.5"/><rect x="17.5" y="3" width="4" height="4" fill="#30c030" stroke="#108010" stroke-width="0.5"/><rect x="2.5" y="17" width="4" height="4" fill="#30c030" stroke="#108010" stroke-width="0.5"/><rect x="17.5" y="17" width="4" height="4" fill="#30c030" stroke="#108010" stroke-width="0.5"/></symbol><symbol id="i_garrow" viewBox="0 0 24 24"><path d="M6,18 L18,6" stroke="#28a828" stroke-width="2.4"/><path d="M13,4.5 L20.5,3.5 L19.5,11 Z" fill="#30c030" stroke="#108010" stroke-width="0.6"/><circle cx="6" cy="18.5" r="3" fill="url(#igr)" stroke="#333" stroke-width="0.5"/></symbol><symbol id="i_smile" viewBox="0 0 24 24"><path d="M3,9.5 Q12,1.5 21,9.5 Q12,14 3,9.5 Z" fill="#a4aec8" stroke="#4a5678" stroke-width="1"/><circle cx="12" cy="8.3" r="3.4" fill="#3c5a9c"/><circle cx="12" cy="8.3" r="1.5" fill="#101830"/><path d="M3,9 Q12,0 21,9" fill="none" stroke="#2a3450" stroke-width="1.6"/><path d="M5,5.5 L4,3.5 M8,3.6 L7.4,1.6 M12,2.8 V0.8 M16,3.6 L16.6,1.6 M19,5.5 L20,3.5" stroke="#2a3450" stroke-width="0.8"/><circle cx="12" cy="15" r="6.5" fill="url(#ism)" stroke="#b07808" stroke-width="0.6"/><circle cx="9.8" cy="13.5" r="0.9"/><circle cx="14.2" cy="13.5" r="0.9"/><path d="M8.5,16.5 Q12,20 15.5,16.5" fill="none" stroke="#603000" stroke-width="0.9"/></symbol><symbol id="i_axes" viewBox="0 0 24 24"><path d="M2,13 L12,7 L22,11 L12,19 Z" fill="#e8eef8" stroke="#8a96b0" stroke-width="0.7"/><path d="M8,14 V3" stroke="#1860e0" stroke-width="1.6"/><path d="M5.5,5 L8,1 L10.5,5 Z" fill="#1860e0"/><path d="M8,14 L18,7" stroke="#28b028" stroke-width="1.6"/><path d="M15,6 L20,5.5 L18,10 Z" fill="#28b028"/><path d="M8,14 L17,20" stroke="#e02020" stroke-width="1.6"/><path d="M14,20.5 L19,21.5 L17,17 Z" fill="#e02020"/><circle cx="8" cy="14" r="2.2" fill="#e0e0e0" stroke="#555" stroke-width="0.6"/></symbol><symbol id="i_wp2" viewBox="0 0 24 24"><path d="M10,6 L22,4 L22,12 L12,14 Z" fill="#e8eef8" stroke="#8a96b0" stroke-width="0.7"/><path d="M15,10 V2 M15,10 L21,7 M15,10 L20,13" stroke="#1860e0" stroke-width="1"/><path d="M15,10 L20,13" stroke="#e02020" stroke-width="1.2"/><path d="M3,19 L12,10" stroke="#28a828" stroke-width="3"/><path d="M8,8 L14.5,7.5 L14,14 Z" fill="#30c030" stroke="#108010" stroke-width="0.5"/><rect x="11" y="16" width="9" height="5" fill="#d8d8d8" stroke="#555" stroke-width="0.8"/></symbol><symbol id="i_wp3" viewBox="0 0 24 24"><path d="M12,6 L23,4 L23,12 L14,14 Z" fill="#e8eef8" stroke="#8a96b0" stroke-width="0.7"/><path d="M17,10 V2" stroke="#1860e0" stroke-width="1.2"/><path d="M17,10 L22,12.5" stroke="#e02020" stroke-width="1.2"/><path d="M17,10 L22,7" stroke="#28b028" stroke-width="1.2"/><path d="M4,11 L11,8 L10,11 L14,16 L15,13.5 L14,21 L7,19 L10,18 L6,13 Z" fill="#30c030" stroke="#108010" stroke-width="0.6"/></symbol><symbol id="i_grid" viewBox="0 0 24 24"><rect x="2" y="2" width="6.6" height="6.6" fill="#18d8f0"/><rect x="9" y="2" width="6.6" height="6.6" fill="#f0c800"/><rect x="16" y="2" width="6.6" height="6.6" fill="#20c820"/><rect x="2" y="9" width="6.6" height="6.6" fill="#f08018"/><rect x="9" y="9" width="6.6" height="6.6" fill="#b06810"/><rect x="16" y="9" width="6.6" height="6.6" fill="#f010e0"/><rect x="2" y="16" width="6.6" height="6.6" fill="#1818e0"/><rect x="9" y="16" width="6.6" height="6.6" fill="#18a018"/><rect x="16" y="16" width="6.6" height="6.6" fill="#808080"/></symbol><symbol id="i_panel" viewBox="0 0 24 24"><rect x="4" y="2.5" width="16" height="19" fill="#e8ecf8" stroke="#5870a8" stroke-width="1"/><rect x="6" y="4.5" width="12" height="2" fill="#f0b030"/><rect x="6" y="8" width="12" height="2" fill="#88a0d8"/><rect x="6.0" y="11.5" width="3" height="3" fill="#18d8f0"/><rect x="10.2" y="11.5" width="3" height="3" fill="#f0c800"/><rect x="14.4" y="11.5" width="3" height="3" fill="#20c820"/><rect x="6.0" y="14.8" width="3" height="3" fill="#f08018"/><rect x="10.2" y="14.8" width="3" height="3" fill="#b06810"/><rect x="14.4" y="14.8" width="3" height="3" fill="#f010e0"/><rect x="6.0" y="18.1" width="3" height="3" fill="#1818e0"/><rect x="10.2" y="18.1" width="3" height="3" fill="#18a018"/><rect x="14.4" y="18.1" width="3" height="3" fill="#808080"/></symbol><symbol id="i_gtools" viewBox="0 0 24 24"><circle cx="12" cy="12" r="10.5" fill="#5a9a38" stroke="#386820" stroke-width="1"/><path d="M7,7 l10,10" stroke="#e8e8f0" stroke-width="3" stroke-linecap="round"/><circle cx="7" cy="7" r="2.6" fill="none" stroke="#e8e8f0" stroke-width="1.8"/><path d="M17,6.5 l-10,10.5" stroke="#3870d0" stroke-width="2.8" stroke-linecap="round"/><path d="M15,5 l4,4" stroke="#c0c8d8" stroke-width="2.4"/></symbol><symbol id="i_wtools" viewBox="0 0 24 24"><rect x="2" y="3" width="20" height="18" fill="#c8dcf4" stroke="#385898" stroke-width="1"/><rect x="2" y="3" width="20" height="4" fill="#3860b0"/><path d="M4,9 h3 M9,9 h3 M14,9 h3 M4,12 h3" stroke="#d8a020" stroke-width="1.6"/><path d="M9,11 l9,8" stroke="#e8e8f0" stroke-width="2.6" stroke-linecap="round"/><path d="M18,11 l-8,8.5" stroke="#3870d0" stroke-width="2.4" stroke-linecap="round"/></symbol><symbol id="i_hand" viewBox="0 0 24 24"><rect x="3" y="4" width="18" height="17" fill="none" stroke="#182858" stroke-width="1.4" stroke-dasharray="1.6 1.6"/><path d="M8,12 Q10,6 16,6 L22,5 V11 L15,13 Q13,17 8,15 Z" fill="#f0b878" stroke="#a06828" stroke-width="0.7"/><circle cx="7" cy="16.5" r="3" fill="#f8f080" stroke="#2050c0" stroke-width="0.8"/><path d="M5.5,16.5 h3 M7,15 v3" stroke="#2050c0" stroke-width="0.9"/></symbol><symbol id="i_rgrid" viewBox="0 0 24 24"><path d="M7,5 L22,3 L17,19 L2,21 Z" fill="#e06060" stroke="#2858c8" stroke-width="1.6"/><path d="M12,4.4 L7,20.4 M17,3.7 L12,19.7 M5.5,10 L20.4,8 M4,15.4 L18.8,13.5" stroke="#f0c8c8" stroke-width="1"/></symbol><symbol id="i_montools" viewBox="0 0 24 24"><rect x="3" y="4" width="18" height="13" fill="#4868a8" stroke="#283858" stroke-width="1"/><path d="M6,7 l12,11" stroke="#d0d4e0" stroke-width="3" stroke-linecap="round"/><path d="M18,6 l-12,13" stroke="#5890e8" stroke-width="2.8" stroke-linecap="round"/></symbol><symbol id="i_cyl2" viewBox="0 0 24 24"><g transform="translate(-3,-2) scale(0.8)"><path d="M6.5,5.5 V19 A5.5,2 0 0 0 17.5,19 V5.5 Z" fill="#f0f0f0" stroke="#444" stroke-width="1"/><ellipse cx="12" cy="5.5" rx="5.5" ry="2.3" fill="#e0e0e0" stroke="#444" stroke-width="1"/></g><g transform="translate(5,4) scale(0.8)"><ellipse cx="15" cy="20.6" rx="7" ry="1.6" fill="#555" opacity="0.45"/><path d="M6.5,5.5 V19 A5.5,2 0 0 0 17.5,19 V5.5 Z" fill="url(#ib)" stroke="#18285c" stroke-width="1"/><ellipse cx="12" cy="5.5" rx="5.5" ry="2.3" fill="#5478c8" stroke="#18285c" stroke-width="1"/></g><path d="M14,2 l4,-1 l1,3.5 M6,18 l-1,4 l4,0.5" stroke="#28b028" stroke-width="2" fill="none"/></symbol><symbol id="i_cylref" viewBox="0 0 24 24"><g transform="translate(-3,-1) scale(0.9)"><ellipse cx="15" cy="20.6" rx="7" ry="1.6" fill="#555" opacity="0.45"/><path d="M6.5,5.5 V19 A5.5,2 0 0 0 17.5,19 V5.5 Z" fill="url(#ib)" stroke="#18285c" stroke-width="1"/><ellipse cx="12" cy="5.5" rx="5.5" ry="2.3" fill="#5478c8" stroke="#18285c" stroke-width="1"/></g><g transform="translate(9,9) scale(0.6)"><path d="M4,11 A8,7 0 0 1 18,6.5 L20,4.5 V11 H13.5 L15.8,8.7 A5,4.5 0 0 0 7,11 Z" fill="#7aa8e8" stroke="#3468b8" stroke-width="0.7"/><path d="M20,13 A8,7 0 0 1 6,17.5 L4,19.5 V13 H10.5 L8.2,15.3 A5,4.5 0 0 0 17,13 Z" fill="#5a90dc" stroke="#3468b8" stroke-width="0.7"/></g></symbol><symbol id="i_pal" viewBox="0 0 24 24"><path d="M3,5 h12 v2.4 h-12 Z" fill="#5878d0" stroke="#283c80" stroke-width="0.5"/><path d="M3,8.2 h12 v2.4 h-12 Z" fill="#88a0e0" stroke="#283c80" stroke-width="0.5"/><path d="M3,11.4 h12 v2.4 h-12 Z" fill="#e8ecf8" stroke="#283c80" stroke-width="0.5"/><ellipse cx="12" cy="17.5" rx="8" ry="4.6" fill="#d8b078" stroke="#705020" stroke-width="0.7"/><circle cx="8" cy="17" r="1.5" fill="#2040d0"/><circle cx="11.5" cy="19" r="1.5" fill="#e02020"/><circle cx="15.5" cy="17.5" r="1.5" fill="#20b020"/><path d="M21,3 L12,14" stroke="#a05818" stroke-width="1.8"/><path d="M12,14 l-1.5,3" stroke="#404040" stroke-width="1.6"/></symbol><symbol id="i_doceye" viewBox="0 0 24 24"><path d="M9,2 h8 l3,3 v12 h-11 Z" fill="#e8f0fc" stroke="#384870" stroke-width="0.9"/><path d="M4,5 h9 v11 h-9 Z" fill="#c0d0ec" stroke="#384870" stroke-width="0.9"/><g transform="translate(1,11) scale(0.85)"><path d="M3,9.5 Q12,1.5 21,9.5 Q12,14 3,9.5 Z" fill="#a4aec8" stroke="#4a5678" stroke-width="1"/><circle cx="12" cy="8.3" r="3.4" fill="#3c5a9c"/><circle cx="12" cy="8.3" r="1.5" fill="#101830"/><path d="M3,9 Q12,0 21,9" fill="none" stroke="#2a3450" stroke-width="1.6"/><path d="M5,5.5 L4,3.5 M8,3.6 L7.4,1.6 M12,2.8 V0.8 M16,3.6 L16.6,1.6 M19,5.5 L20,3.5" stroke="#2a3450" stroke-width="0.8"/></g></symbol><symbol id="i_vlogo" viewBox="0 0 16 16"><rect x="0" y="0" width="16" height="16" fill="#6cbf3c"/><path d="M3.5,4 L7,12.5 L12.5,2.5" fill="none" stroke="#fff" stroke-width="2.4"/><circle cx="3.8" cy="3.2" r="1" fill="#fff"/></symbol><symbol id="i_new" viewBox="0 0 24 24"><path d="M6,2.5 h8 l4,4 v14 h-12 Z" fill="url(#ig)" stroke="#111" stroke-width="1.1"/><path d="M14,2.5 v4 h4" fill="#fff" stroke="#111" stroke-width="0.8"/></symbol><symbol id="i_open" viewBox="0 0 24 24"><path d="M2,8 h6 l2,2 h9 v10 h-17 Z" fill="url(#ifo)" stroke="#a07010" stroke-width="0.7"/><path d="M2,20 l3,-8 h17 l-3,8 Z" fill="#f8d860" stroke="#a07010" stroke-width="0.7"/><path d="M8,9 Q10,3 17,5 L16,2.5 L22,6 L17,10 L17,7.5 Q12,6 11,10 Z" fill="#30b030" stroke="#107010" stroke-width="0.6"/></symbol><symbol id="i_fdocs" viewBox="0 0 24 24"><path d="M1,3 h6 l1.5,1.5 h4 v5 h-11.5 Z M1,11 h6 l1.5,1.5 h4 v7 h-11.5 Z" fill="url(#ifo)" stroke="#a07010" stroke-width="0.6"/><path d="M12,6 h6 l3,3 v11 h-9 Z" fill="url(#ig)" stroke="#384870" stroke-width="0.8"/><path d="M10,10 h5 v9 h-5 Z" fill="#d8f0d0" stroke="#50a040" stroke-width="0.6"/></symbol><symbol id="i_save" viewBox="0 0 24 24"><rect x="4" y="3" width="16" height="17" fill="#4868b8" stroke="#182858" stroke-width="0.8"/><rect x="6.4" y="3.8" width="11.2" height="7.65" fill="#f4f4f8"/><path d="M7.2,5.55 h9.6 M7.2,8.1 h9.6" stroke="#e03030" stroke-width="0.8"/><rect x="8.0" y="13.54" width="8.0" height="5.78" fill="#c0c8d8"/><rect x="9.120000000000001" y="14.56" width="2.56" height="4.08" fill="#283868"/></symbol><symbol id="i_saveall" viewBox="0 0 24 24"><rect x="9" y="2" width="12" height="12" fill="#4868b8" stroke="#182858" stroke-width="0.8"/><rect x="10.8" y="2.8" width="8.399999999999999" height="5.4" fill="#f4f4f8"/><path d="M11.4,3.8 h7.199999999999999 M11.4,5.6 h7.199999999999999" stroke="#e03030" stroke-width="0.8"/><rect x="12.0" y="9.44" width="6.0" height="4.08" fill="#c0c8d8"/><rect x="12.84" y="10.16" width="1.92" height="2.88" fill="#283868"/><rect x="3" y="8" width="12" height="12" fill="#4868b8" stroke="#182858" stroke-width="0.8"/><rect x="4.8" y="8.8" width="8.399999999999999" height="5.4" fill="#f4f4f8"/><path d="M5.4,9.8 h7.199999999999999 M5.4,11.6 h7.199999999999999" stroke="#e03030" stroke-width="0.8"/><rect x="6.0" y="15.44" width="6.0" height="4.08" fill="#c0c8d8"/><rect x="6.84" y="16.16" width="1.92" height="2.88" fill="#283868"/></symbol><symbol id="i_savebox" viewBox="0 0 24 24"><rect x="1" y="1" width="11" height="11" fill="#4868b8" stroke="#182858" stroke-width="0.8"/><rect x="2.65" y="1.8" width="7.699999999999999" height="4.95" fill="#f4f4f8"/><path d="M3.2,2.65 h6.6 M3.2,4.3 h6.6" stroke="#e03030" stroke-width="0.8"/><rect x="3.75" y="7.82" width="5.5" height="3.74" fill="#c0c8d8"/><rect x="4.52" y="8.48" width="1.76" height="2.6399999999999997" fill="#283868"/><rect x="4" y="4" width="11" height="11" fill="#4868b8" stroke="#182858" stroke-width="0.8"/><rect x="5.65" y="4.8" width="7.699999999999999" height="4.95" fill="#f4f4f8"/><path d="M6.2,5.65 h6.6 M6.2,7.3 h6.6" stroke="#e03030" stroke-width="0.8"/><rect x="6.75" y="10.82" width="5.5" height="3.74" fill="#c0c8d8"/><rect x="7.52" y="11.48" width="1.76" height="2.6399999999999997" fill="#283868"/><path d="M12,12 l5,-2 l5,2 v6 l-5,2.5 l-5,-2.5 Z" fill="#909090" stroke="#333" stroke-width="0.6"/><path d="M12,12 l5,2 l5,-2 M17,14 v6.5" stroke="#333" stroke-width="0.6" fill="none"/><path d="M14,6 Q18,3 20,8 l1.5,-1 l-1,4 l-4,-1 l1.5,-1 Q17,6 14,6 Z" fill="#30b030" stroke="#107010" stroke-width="0.5"/></symbol><symbol id="i_print" viewBox="0 0 24 24"><path d="M6,11 V3 h12 v8" fill="#f4f8ff" stroke="#555" stroke-width="0.8"/><path d="M2,11 h20 v8 h-20 Z" fill="#d0d0d4" stroke="#444" stroke-width="0.8"/><path d="M4,15 h16 v5 h-16 Z" fill="#f0f0f0" stroke="#444" stroke-width="0.6"/><path d="M12,4 l3.5,4 h-2.2 v3 h-2.6 v-3 h-2.2 Z" fill="#30b030" stroke="#107010" stroke-width="0.5"/></symbol><symbol id="i_gmag" viewBox="0 0 24 24"><circle cx="11" cy="11" r="10" fill="#58a038" stroke="#3c7020" stroke-width="1"/><circle cx="10.5" cy="10.5" r="6" fill="#d0e4f8" stroke="#7888a0" stroke-width="1.6"/><path d="M15,15 L21,21" stroke="#b0b0b8" stroke-width="3" stroke-linecap="round"/><path d="M10.5,6 v5 l2.5,2" stroke="#88a0c0" stroke-width="0.9" fill="none"/></symbol><symbol id="i_undo" viewBox="0 0 24 24"><g><ellipse cx="13" cy="20.5" rx="7" ry="1.5" fill="#777" opacity="0.35"/><path d="M19,20 Q21,9 11,9.5 L11,13.5 L3,8 L11,2.5 L11,6 Q24,5.5 19,20 Z" fill="#a0a0a0" stroke="#686868" stroke-width="0.8"/></g></symbol><symbol id="i_redo" viewBox="0 0 24 24"><g transform="translate(24,0) scale(-1,1)"><ellipse cx="13" cy="20.5" rx="7" ry="1.5" fill="#777" opacity="0.35"/><path d="M19,20 Q21,9 11,9.5 L11,13.5 L3,8 L11,2.5 L11,6 Q24,5.5 19,20 Z" fill="#a0a0a0" stroke="#686868" stroke-width="0.8"/></g></symbol><symbol id="i_undoh" viewBox="0 0 24 24"><g><ellipse cx="13" cy="20.5" rx="7" ry="1.5" fill="#777" opacity="0.35"/><path d="M19,20 Q21,9 11,9.5 L11,13.5 L3,8 L11,2.5 L11,6 Q24,5.5 19,20 Z" fill="#6898e0" stroke="#2858a8" stroke-width="0.8"/></g><path d="M3,12 h7 l-2.6,4.5 l2.6,4.5 h-7 l2.6,-4.5 Z" fill="#d8b050" stroke="#604008" stroke-width="0.8"/></symbol><symbol id="i_mags" viewBox="0 0 24 24"><circle cx="10" cy="10" r="4.5" fill="#e8f0fc" stroke="#788498" stroke-width="1.6"/><path d="M6.85,13.15 L2,18" stroke="#8a8a8a" stroke-width="2.6" stroke-linecap="round"/><circle cx="12.5" cy="11" r="5" fill="#d8e6f8" stroke="#788498" stroke-width="1.6"/><path d="M9.0,14.5 L5,20" stroke="#8a8a8a" stroke-width="2.6" stroke-linecap="round"/><circle cx="15" cy="12" r="5.5" fill="#d8e6f8" stroke="#788498" stroke-width="1.6"/><path d="M11.15,15.85 L8,21" stroke="#8a8a8a" stroke-width="2.6" stroke-linecap="round"/></symbol><symbol id="i_penl" viewBox="0 0 24 24"><path d="M3,5 L20,20 M3,11 L14,21 M9,3 L21,14" stroke="#3868d0" stroke-width="1.3"/><path d="M5,19 L7,14 L19,2 L22,5 L10,17 Z" fill="#e8a040" stroke="#704008" stroke-width="0.7"/><path d="M5,19 L7,14 L10,17 Z" fill="#f8e0b0" stroke="#704008" stroke-width="0.5"/><path d="M18,3 L21,6 L22,5 L19,2 Z" fill="#d83030"/></symbol><symbol id="i_pens" viewBox="0 0 24 24"><path d="M10,4 Q2,4 5,10 Q8,14 14,14 Q22,15 19,20 Q16,23 12,20" fill="none" stroke="#3868d0" stroke-width="1.6"/><path d="M5,19 L7,14 L19,2 L22,5 L10,17 Z" fill="#e8a040" stroke="#704008" stroke-width="0.7"/><path d="M5,19 L7,14 L10,17 Z" fill="#f8e0b0" stroke="#704008" stroke-width="0.5"/><path d="M18,3 L21,6 L22,5 L19,2 Z" fill="#d83030"/></symbol><symbol id="i_penw" viewBox="0 0 24 24"><path d="M2,16 Q6,2 11,12 Q15,22 21,12" fill="none" stroke="#3868d0" stroke-width="1.6"/><path d="M5,19 L7,14 L19,2 L22,5 L10,17 Z" fill="#e8a040" stroke="#704008" stroke-width="0.7"/><path d="M5,19 L7,14 L10,17 Z" fill="#f8e0b0" stroke="#704008" stroke-width="0.5"/><path d="M18,3 L21,6 L22,5 L19,2 Z" fill="#d83030"/></symbol><symbol id="i_ycheck" viewBox="0 0 24 24"><rect x="4" y="5" width="15" height="15" fill="#f8f8d0" stroke="#e8d800" stroke-width="1.8"/><rect x="15" y="15" width="5" height="5" fill="#d6dbe9" stroke="#e8d800" stroke-width="1.2"/><path d="M7,12 L11,17 L18,7" fill="none" stroke="#28b028" stroke-width="2.8"/></symbol><symbol id="i_bwin" viewBox="0 0 24 24"><path d="M7,5 L22,3 L17,19 L2,21 Z" fill="#a8c8f4" stroke="#2858c8" stroke-width="1.4"/><path d="M14.5,4 L9.5,20 M4.5,13 L19.5,11" stroke="#e8f0fc" stroke-width="1.4"/></symbol><symbol id="i_gcube" viewBox="0 0 24 24"><path d="M3,8 L12,4 L21,7 V17 L12,21 L3,18 Z" fill="#909090" stroke="#333" stroke-width="0.7"/><path d="M3,8 L12,11 L21,7 L12,4 Z" fill="#d0d0d0" stroke="#333" stroke-width="0.6"/><path d="M12,11 V21 L21,17 V7 Z" fill="#585858" stroke="#333" stroke-width="0.6"/></symbol><symbol id="i_q" viewBox="0 0 24 24"><ellipse cx="12" cy="22" rx="6" ry="1.3" fill="#666" opacity="0.4"/><path d="M7,8 Q7,3 12,3 Q17.5,3 17.5,7.5 Q17.5,10.5 14,12 Q12.5,13 12.5,15.5" fill="none" stroke="#3868c8" stroke-width="3"/><circle cx="12.5" cy="19.5" r="1.8" fill="#3868c8"/></symbol><symbol id="i_dim" viewBox="0 0 24 24"><path d="M4,6 V21 M20,6 V21" stroke="#222" stroke-width="1.4"/><path d="M5,8 H19" stroke="#e8d000" stroke-width="2"/><path d="M5,8 l3,-2.5 v5 Z M19,8 l-3,-2.5 v5 Z" fill="#e8d000" stroke="#908000" stroke-width="0.4"/></symbol><symbol id="i_trash" viewBox="0 0 24 24"><path d="M5,8 h14 l-2,13 h-10 Z" fill="#b8d8f0" stroke="#4878a8" stroke-width="0.9"/><ellipse cx="12" cy="8" rx="7.5" ry="2" fill="#88b0d8" stroke="#4878a8" stroke-width="0.8"/><path d="M9,4 l3,-2 l3,2 l-1,3 h-4 Z" fill="#e8d020" stroke="#807010" stroke-width="0.5"/><path d="M9,12 l6,6 M15,12 l-6,6" stroke="#e8f4d0" stroke-width="1.2"/></symbol><symbol id="i_wheel" viewBox="0 0 24 24"><path d="M3,2 v14 M5.5,2 v14" stroke="#555" stroke-width="1.4"/><circle cx="14" cy="12" r="6" fill="none" stroke="#a05818" stroke-width="1.8"/><path d="M14,3 v18 M5,12 h18 M7.6,5.6 l12.8,12.8 M20.4,5.6 l-12.8,12.8" stroke="#a05818" stroke-width="1.1"/><circle cx="14" cy="12" r="2" fill="#e88020"/><path d="M2,19 l8,-3 l6,2 l-9,4 Z M8,22 l8,-3 l5,1.5 l-8,3 Z" fill="#f08820" stroke="#f8c070" stroke-width="0.5"/></symbol><symbol id="i_fold2" viewBox="0 0 24 24"><path d="M2,8 h6 l2,2 h9 v10 h-17 Z" fill="url(#ifo)" stroke="#a07010" stroke-width="0.7"/><path d="M2,20 l3,-8 h17 l-3,8 Z" fill="#f8d860" stroke="#a07010" stroke-width="0.7"/><path d="M8,12 h13 v10 h-13 Z" fill="#fff" stroke="#222" stroke-width="0.9"/><path d="M8,17 h5 v-2 h8" fill="none" stroke="#222" stroke-width="0.7"/><path d="M9,6 Q11,2 16,3.5 L16,1.5 L21,5 L16,8 L16,6 Q12,5 11.5,7 Z" fill="#30b030" stroke="#107010" stroke-width="0.5"/></symbol><symbol id="i_cb1" viewBox="0 0 22 22"><path d="M11,2 V11.6 L2.6,15.6 M11,11.6 L19.4,15.6" fill="none" stroke="#0a0a0a" stroke-width="1.15"/><path d="M11,2 L19.7,5.7 L11,9.4 L2.3,5.7 Z" fill="#5ce84c"/><path d="M11,2 L19.7,5.7 L19.4,15.6 L11,19.6 L2.6,15.6 L2.3,5.7 Z M2.3,5.7 L11,9.4 L19.7,5.7 M11,9.4 V19.6" fill="none" stroke="#0a0a0a" stroke-width="1.25" stroke-linejoin="round"/></symbol><symbol id="i_cb2" viewBox="0 0 22 22"><path d="M11,2 V11.6 L2.6,15.6 M11,11.6 L19.4,15.6" fill="none" stroke="#0a0a0a" stroke-width="1.15"/><path d="M2.6,15.6 L11,11.6 L19.4,15.6 L11,19.6 Z" fill="#34d028"/><path d="M11,2 L19.7,5.7 L19.4,15.6 L11,19.6 L2.6,15.6 L2.3,5.7 Z M2.3,5.7 L11,9.4 L19.7,5.7 M11,9.4 V19.6" fill="none" stroke="#0a0a0a" stroke-width="1.25" stroke-linejoin="round"/></symbol><symbol id="i_cb3" viewBox="0 0 22 22"><path d="M11,2 V11.6 L2.6,15.6 M11,11.6 L19.4,15.6" fill="none" stroke="#0a0a0a" stroke-width="1.15"/><path d="M11,2 L2.3,5.7 L2.6,15.6 L11,11.6 Z" fill="#34d028"/><path d="M11,2 L19.7,5.7 L19.4,15.6 L11,19.6 L2.6,15.6 L2.3,5.7 Z M2.3,5.7 L11,9.4 L19.7,5.7 M11,9.4 V19.6" fill="none" stroke="#0a0a0a" stroke-width="1.25" stroke-linejoin="round"/></symbol><symbol id="i_cb4" viewBox="0 0 22 22"><path d="M11,2 V11.6 L2.6,15.6 M11,11.6 L19.4,15.6" fill="none" stroke="#0a0a0a" stroke-width="1.15"/><path d="M11,9.4 L19.7,5.7 L19.4,15.6 L11,19.6 Z" fill="#22b01c"/><path d="M11,2 L19.7,5.7 L19.4,15.6 L11,19.6 L2.6,15.6 L2.3,5.7 Z M2.3,5.7 L11,9.4 L19.7,5.7 M11,9.4 V19.6" fill="none" stroke="#0a0a0a" stroke-width="1.25" stroke-linejoin="round"/></symbol><symbol id="i_cb5" viewBox="0 0 22 22"><path d="M11,2 V11.6 L2.6,15.6 M11,11.6 L19.4,15.6" fill="none" stroke="#0a0a0a" stroke-width="1.15"/><path d="M2.3,5.7 L11,9.4 L11,19.6 L2.6,15.6 Z" fill="#34d028"/><path d="M11,2 L19.7,5.7 L19.4,15.6 L11,19.6 L2.6,15.6 L2.3,5.7 Z M2.3,5.7 L11,9.4 L19.7,5.7 M11,9.4 V19.6" fill="none" stroke="#0a0a0a" stroke-width="1.25" stroke-linejoin="round"/></symbol><symbol id="i_cb6" viewBox="0 0 22 22"><path d="M11,2 V11.6 L2.6,15.6 M11,11.6 L19.4,15.6" fill="none" stroke="#0a0a0a" stroke-width="1.15"/><path d="M11,2 L19.7,5.7 L19.4,15.6 L11,11.6 Z" fill="#34d028"/><path d="M11,2 L19.7,5.7 L19.4,15.6 L11,19.6 L2.6,15.6 L2.3,5.7 Z M2.3,5.7 L11,9.4 L19.7,5.7 M11,9.4 V19.6" fill="none" stroke="#0a0a0a" stroke-width="1.25" stroke-linejoin="round"/></symbol><symbol id="i_cb7" viewBox="0 0 22 22"><path d="M11,2 L19.7,5.7 L11,9.4 L2.3,5.7 Z" fill="#5ce84c"/><path d="M2.3,5.7 L11,9.4 L11,19.6 L2.6,15.6 Z" fill="#34d028"/><path d="M11,9.4 L19.7,5.7 L19.4,15.6 L11,19.6 Z" fill="#22b01c"/><path d="M11,2 L19.7,5.7 L19.4,15.6 L11,19.6 L2.6,15.6 L2.3,5.7 Z M2.3,5.7 L11,9.4 L19.7,5.7 M11,9.4 V19.6" fill="none" stroke="#0a0a0a" stroke-width="1.25" stroke-linejoin="round"/></symbol><symbol id="i_bars" viewBox="0 0 22 22"><path d="M3,5.5 h16 M3,11 h16 M3,16.5 h16" stroke="#3c5488" stroke-width="3.6"/></symbol><symbol id="i_vfit" viewBox="0 0 22 22"><rect x="5" y="5" width="12" height="12" fill="url(#ig)" stroke="#444" stroke-width="0.8"/><rect x="3" y="3" width="4" height="4" fill="#30c030" stroke="#108010" stroke-width="0.5"/><rect x="15" y="3" width="4" height="4" fill="#30c030" stroke="#108010" stroke-width="0.5"/><rect x="3" y="15" width="4" height="4" fill="#30c030" stroke="#108010" stroke-width="0.5"/><rect x="15" y="15" width="4" height="4" fill="#30c030" stroke="#108010" stroke-width="0.5"/></symbol><symbol id="i_vmag" viewBox="0 0 22 22"><circle cx="9" cy="9" r="4.5" fill="#e8f0fc" stroke="#788498" stroke-width="1.6"/><path d="M5.85,12.15 L2,17" stroke="#8a8a8a" stroke-width="2.6" stroke-linecap="round"/><circle cx="11" cy="10" r="5" fill="#d8e6f8" stroke="#788498" stroke-width="1.6"/><path d="M7.5,13.5 L4,18" stroke="#8a8a8a" stroke-width="2.6" stroke-linecap="round"/><circle cx="13.5" cy="10.5" r="5.2" fill="#d8e6f8" stroke="#788498" stroke-width="1.6"/><path d="M9.86,14.14 L6,19" stroke="#8a8a8a" stroke-width="2.6" stroke-linecap="round"/></symbol><symbol id="i_vaxes" viewBox="0 0 22 22"><path d="M2,14 L11,10 L20,14 L11,19 Z" fill="#a8aec4" stroke="#787e98" stroke-width="0.5"/><path d="M11,14 V3" stroke="#1860e0" stroke-width="1.6"/><path d="M8.5,5 L11,1 L13.5,5 Z" fill="#1860e0"/><path d="M11,14 L18,8" stroke="#28c028" stroke-width="1.4"/><path d="M11,14 L17,19" stroke="#e02020" stroke-width="1.6"/><path d="M14.5,19.5 L19,20.5 L17.5,16.5 Z" fill="#e02020"/><circle cx="11" cy="14" r="1.8" fill="#e8e8e8" stroke="#555" stroke-width="0.5"/></symbol><symbol id="i_vcw" viewBox="0 0 22 22"><g transform="translate(-1,-1)"><path d="M7,6.5 V18 A5,2 0 0 0 17,18 V6.5 Z" fill="none" stroke="#222" stroke-width="1"/><ellipse cx="12" cy="6.5" rx="5" ry="2.3" fill="none" stroke="#222" stroke-width="0.85"/><path d="M7,18 A5,2 0 0 1 17,18" fill="none" stroke="#444" stroke-width="0.6"/></g></symbol><symbol id="i_vcw2" viewBox="0 0 22 22"><g transform="translate(-1,-1)"><path d="M7,6.5 V18 A5,2 0 0 0 17,18 V6.5 Z" fill="none" stroke="#222" stroke-width="1"/><ellipse cx="12" cy="6.5" rx="5" ry="2.3" fill="none" stroke="#222" stroke-width="0.85"/></g></symbol><symbol id="i_vcb" viewBox="0 0 22 22"><g transform="translate(-1,-1)"><path d="M7,6.5 V18 A5,2 0 0 0 17,18 V6.5 Z" fill="url(#ib)" stroke="#18285c" stroke-width="1"/><ellipse cx="12" cy="6.5" rx="5" ry="2.3" fill="#6890e0" stroke="#18285c" stroke-width="1"/></g></symbol><symbol id="i_vcl" viewBox="0 0 22 22"><g transform="translate(-1,-1)"><path d="M7,6.5 V18 A5,2 0 0 0 17,18 V6.5 Z" fill="url(#il)" stroke="#485888" stroke-width="1"/><ellipse cx="12" cy="6.5" rx="5" ry="2.3" fill="#e8eefc" stroke="#485888" stroke-width="1"/></g></symbol><symbol id="i_vch" viewBox="0 0 22 22"><g transform="translate(-1,-1)"><path d="M7,6.5 V18 A5,2 0 0 0 17,18 V6.5 Z" fill="none" stroke="#222" stroke-width="1"/><ellipse cx="12" cy="6.5" rx="5" ry="2.3" fill="none" stroke="#222" stroke-width="0.85"/><path d="M9,8.5 L10.5,19 M11,8.5 L9.5,19.5 M13,8.5 L14.5,19.5 M15,8.5 L13,19.5" stroke="#222" stroke-width="0.7" fill="none"/></g></symbol><symbol id="i_sref" viewBox="0 0 18 18"><rect x="1" y="1" width="16" height="16" fill="#e8b8c0" stroke="#c03048" stroke-width="1.4"/><g transform="translate(2,2) scale(0.58)"><path d="M4,11 A8,7 0 0 1 18,6.5 L20,4.5 V11 H13.5 L15.8,8.7 A5,4.5 0 0 0 7,11 Z" fill="#d04058" stroke="#a02038" stroke-width="0.7"/><path d="M20,13 A8,7 0 0 1 6,17.5 L4,19.5 V13 H10.5 L8.2,15.3 A5,4.5 0 0 0 17,13 Z" fill="#d04058" stroke="#a02038" stroke-width="0.7"/></g></symbol><symbol id="i_swand" viewBox="0 0 18 18"><rect x="0" y="0" width="18" height="18" fill="#f8e070"/><path d="M4,3 l10,12" stroke="#a050c0" stroke-width="2.2"/><path d="M3,2 l2,4 l3,-3 Z M8,2 l1,2.5 M2,8 l2.5,1" fill="#e8a0f0" stroke="#a050c0" stroke-width="0.8"/><path d="M10,10 l5,6" stroke="#e8e8e8" stroke-width="2.4"/></symbol><symbol id="i_shouse" viewBox="0 0 18 18"><path d="M2,8 L9,3 L16,8 V10 H2 Z" fill="#f0b060" stroke="#905010" stroke-width="0.7"/><rect x="4" y="10" width="10" height="7" fill="#88a8e0" stroke="#3858a0" stroke-width="0.7"/><rect x="6" y="12" width="3" height="3" fill="#e8f0fc"/></symbol><symbol id="i_scubes" viewBox="0 0 18 18"><path d="M6,5 l5,-2 l5,2 v5 l-5,2 l-5,-2 Z" fill="#5890e0" stroke="#183878" stroke-width="0.6"/><path d="M9,10 l4,-1.5 l4,1.5 v4.5 l-4,1.5 l-4,-1.5 Z" fill="#88c0d8" stroke="#183878" stroke-width="0.6"/><path d="M1,10 l6,3 M1,15 l6,-3 M3,8 l3,5 l-4,4" stroke="#e02020" stroke-width="1.4" fill="none"/></symbol><symbol id="i_scol" viewBox="0 0 20 18"><rect x="0" y="0" width="20" height="18" fill="#f8e070"/><path d="M3,6 l7,-3 l7,3 v8 l-7,3 l-7,-3 Z" fill="#28b0d8" stroke="#103868" stroke-width="0.7"/><path d="M3,6 l7,3 l7,-3 l-7,-3 Z" fill="#e040e0" stroke="#103868" stroke-width="0.6"/><path d="M10,9 v8 l7,-3 v-8 Z" fill="#3858c8" stroke="#103868" stroke-width="0.6"/></symbol><symbol id="i_globe" viewBox="0 0 16 16"><circle cx="8" cy="8" r="7.2" fill="#2048c0" stroke="#102060" stroke-width="0.8"/><path d="M4,4 Q8,2 9,5 Q7,8 9,10 Q6,12 4,9 Z M11,8 Q14,7 14,10 Q12,13 10.5,11 Z" fill="#30b030"/><circle cx="5.5" cy="4.5" r="1.6" fill="#fff" opacity="0.5"/></symbol></defs><use href="#i_vlogo" x="2.0" y="3.0" width="15" height="15"/><path d="M20.5,5 v13 M312.5,5 v13" stroke="#9aa0b0" stroke-width="1"/><use href="#i_new" x="29.0" y="1.5" width="21" height="21"/><use href="#i_open" x="53.5" y="1.5" width="21" height="21"/><use href="#i_fdocs" x="77.5" y="1.5" width="21" height="21"/><use href="#i_save" x="100.5" y="1.5" width="21" height="21"/><use href="#i_saveall" x="125.5" y="1.5" width="21" height="21"/><use href="#i_savebox" x="149.5" y="1.5" width="21" height="21"/><use href="#i_print" x="173.5" y="1.5" width="21" height="21"/><use href="#i_gmag" x="196.5" y="1.5" width="21" height="21"/><use href="#i_undo" x="221.5" y="1.5" width="21" height="21"/><use href="#i_redo" x="244.5" y="1.5" width="21" height="21"/><use href="#i_undoh" x="268.5" y="1.5" width="21" height="21"/><path d="M294.5,10 h7 M294.5,12.5 h7 l-3.5,3.8 Z" fill="#111" stroke="#111" stroke-width="1"/><rect x="124.5" y="66.5" width="23" height="23" fill="#ffe070" stroke="#e8b838" stroke-width="1"/><rect x="402.5" y="66.5" width="23" height="23" fill="#ffe070" stroke="#e8b838" stroke-width="1"/><use href="#i_pal" x="21.5" y="67.0" width="23" height="23"/><use href="#i_doceye" x="47.5" y="67.0" width="23" height="23"/><use href="#i_eyepu" x="73.5" y="67.0" width="23" height="23"/><use href="#i_eyemu" x="98.5" y="67.0" width="23" height="23"/><use href="#i_eyetr" x="124.5" y="67.0" width="23" height="23"/><use href="#i_eyerf" x="150.5" y="67.0" width="23" height="23"/><use href="#i_eyepm" x="176.5" y="67.0" width="23" height="23"/><use href="#i_eyep" x="202.5" y="67.0" width="23" height="23"/><use href="#i_eyem" x="228.5" y="67.0" width="23" height="23"/><use href="#i_refb" x="271.5" y="67.0" width="23" height="23"/><use href="#i_cylw" x="298.5" y="67.0" width="23" height="23"/><use href="#i_cylw2" x="324.5" y="67.0" width="23" height="23"/><use href="#i_cylw" x="350.5" y="67.0" width="23" height="23"/><use href="#i_cylbc" x="376.5" y="67.0" width="23" height="23"/><use href="#i_cylb" x="402.5" y="67.0" width="23" height="23"/><use href="#i_cyllc" x="428.5" y="67.0" width="23" height="23"/><use href="#i_cyll" x="454.5" y="67.0" width="23" height="23"/><use href="#i_cylh" x="480.5" y="67.0" width="23" height="23"/><use href="#i_cyl2" x="506.5" y="67.0" width="23" height="23"/><use href="#i_cylref" x="532.5" y="67.0" width="23" height="23"/><use href="#i_montools" x="558.5" y="67.0" width="23" height="23"/><use href="#i_cubpu" x="600.5" y="67.0" width="23" height="23"/><use href="#i_cubtr" x="626.5" y="67.0" width="23" height="23"/><use href="#i_cubrf" x="652.5" y="67.0" width="23" height="23"/><use href="#i_cubpm" x="678.5" y="67.0" width="23" height="23"/><use href="#i_cyld" x="705.5" y="67.0" width="23" height="23"/><use href="#i_cyly" x="731.5" y="67.0" width="23" height="23"/><use href="#i_cylck" x="757.5" y="67.0" width="23" height="23"/><use href="#i_cylsq" x="783.5" y="67.0" width="23" height="23"/><use href="#i_cylhb" x="809.5" y="67.0" width="23" height="23"/><use href="#i_gem" x="835.5" y="67.0" width="23" height="23"/><use href="#i_magpm" x="876.5" y="67.0" width="23" height="23"/><use href="#i_magfit" x="902.5" y="67.0" width="23" height="23"/><use href="#i_one" x="928.5" y="67.0" width="23" height="23"/><use href="#i_garrow" x="955.5" y="67.0" width="23" height="23"/><use href="#i_refg" x="981.5" y="67.0" width="23" height="23"/><use href="#i_smile" x="1007.5" y="67.0" width="23" height="23"/><use href="#i_axes" x="1050.5" y="67.0" width="23" height="23"/><use href="#i_wp2" x="1076.5" y="67.0" width="23" height="23"/><use href="#i_wp3" x="1102.5" y="67.0" width="23" height="23"/><use href="#i_grid" x="1145.5" y="67.0" width="23" height="23"/><use href="#i_panel" x="1171.5" y="67.0" width="23" height="23"/><use href="#i_gtools" x="1197.5" y="67.0" width="23" height="23"/><use href="#i_wtools" x="1223.5" y="67.0" width="23" height="23"/><use href="#i_hand" x="1249.5" y="67.0" width="23" height="23"/><use href="#i_rgrid" x="1275.5" y="67.0" width="23" height="23"/><use href="#i_mags" x="6.0" y="132.0" width="22" height="22"/><use href="#i_penl" x="32.0" y="132.0" width="22" height="22"/><path d="M49,132 h5 l-2.5,3 Z" fill="#111"/><use href="#i_fit" x="6.0" y="158.0" width="22" height="22"/><use href="#i_pens" x="32.0" y="158.0" width="22" height="22"/><path d="M49,158 h5 l-2.5,3 Z" fill="#111"/><use href="#i_magpm" x="6.0" y="184.0" width="22" height="22"/><use href="#i_ycheck" x="32.0" y="184.0" width="22" height="22"/><path d="M23,184 h5 l-2.5,3 Z" fill="#111"/><path d="M49,184 h5 l-2.5,3 Z" fill="#111"/><use href="#i_axes" x="6.0" y="210.0" width="22" height="22"/><use href="#i_penw" x="32.0" y="210.0" width="22" height="22"/><path d="M23,210 h5 l-2.5,3 Z" fill="#111"/><path d="M49,210 h5 l-2.5,3 Z" fill="#111"/><use href="#i_pal" x="6.0" y="236.0" width="22" height="22"/><use href="#i_bwin" x="32.0" y="236.0" width="22" height="22"/><path d="M23,236 h5 l-2.5,3 Z" fill="#111"/><path d="M49,236 h5 l-2.5,3 Z" fill="#111"/><use href="#i_refb" x="6.0" y="261.0" width="22" height="22"/><use href="#i_gcube" x="32.0" y="261.0" width="22" height="22"/><path d="M23,261 h5 l-2.5,3 Z" fill="#111"/><path d="M49,261 h5 l-2.5,3 Z" fill="#111"/><use href="#i_q" x="6.0" y="287.0" width="22" height="22"/><use href="#i_dim" x="32.0" y="287.0" width="22" height="22"/><path d="M23,287 h5 l-2.5,3 Z" fill="#111"/><path d="M49,287 h5 l-2.5,3 Z" fill="#111"/><use href="#i_trash" x="6.0" y="313.0" width="22" height="22"/><use href="#i_undo" x="32.0" y="313.0" width="22" height="22"/><path d="M23,313 h5 l-2.5,3 Z" fill="#111"/><path d="M49,313 h5 l-2.5,3 Z" fill="#111"/><use href="#i_wheel" x="6.0" y="340.0" width="22" height="22"/><use href="#i_fold2" x="32.0" y="340.0" width="22" height="22"/><path d="M23,340 h5 l-2.5,3 Z" fill="#111"/><rect x="64" y="113" width="24" height="24" fill="#8b8fa7"/><use href="#i_bars" x="64.0" y="113.0" width="24" height="24"/><rect x="92" y="113" width="24" height="24" fill="#8b8fa7"/><use href="#i_vfit" x="92.0" y="113.0" width="24" height="24"/><rect x="120" y="113" width="24" height="24" fill="#8b8fa7"/><use href="#i_vmag" x="120.0" y="113.0" width="24" height="24"/><rect x="148" y="113" width="24" height="24" fill="#8b8fa7"/><use href="#i_vaxes" x="148.0" y="113.0" width="24" height="24"/><rect x="176" y="113" width="24" height="24" fill="#8b8fa7"/><use href="#i_cb1" x="176.0" y="113.0" width="24" height="24"/><rect x="204" y="113" width="24" height="24" fill="#8b8fa7"/><use href="#i_cb2" x="204.0" y="113.0" width="24" height="24"/><rect x="232" y="113" width="24" height="24" fill="#8b8fa7"/><use href="#i_cb3" x="232.0" y="113.0" width="24" height="24"/><rect x="260" y="113" width="24" height="24" fill="#8b8fa7"/><use href="#i_cb4" x="260.0" y="113.0" width="24" height="24"/><rect x="288" y="113" width="24" height="24" fill="#8b8fa7"/><use href="#i_cb5" x="288.0" y="113.0" width="24" height="24"/><rect x="316" y="113" width="24" height="24" fill="#8b8fa7"/><use href="#i_cb6" x="316.0" y="113.0" width="24" height="24"/><rect x="344" y="113" width="24" height="24" fill="#8b8fa7"/><use href="#i_cb7" x="344.0" y="113.0" width="24" height="24"/><rect x="64" y="141" width="24" height="24" fill="#8b8fa7"/><use href="#i_vcw" x="64.0" y="141.0" width="24" height="24"/><rect x="64" y="169" width="24" height="24" fill="#8b8fa7"/><use href="#i_vcw2" x="64.0" y="169.0" width="24" height="24"/><rect x="64.7" y="197.7" width="22.6" height="22.6" fill="#b8ac88" stroke="#e8c860" stroke-width="1.4"/><use href="#i_vcb" x="64.0" y="197.0" width="24" height="24"/><rect x="64" y="225" width="24" height="24" fill="#8b8fa7"/><use href="#i_vcl" x="64.0" y="225.0" width="24" height="24"/><rect x="64" y="253" width="24" height="24" fill="#8b8fa7"/><use href="#i_vch" x="64.0" y="253.0" width="24" height="24"/><use href="#i_sref" x="1181.5" y="1022.5" width="17" height="17"/><use href="#i_swand" x="1212.0" y="1022.0" width="18" height="18"/><use href="#i_shouse" x="1243.5" y="1022.5" width="17" height="17"/><use href="#i_q" x="1275" y="1022" width="18" height="18"/><use href="#i_scubes" x="1305.0" y="1022.0" width="18" height="18"/><use href="#i_scol" x="1335.0" y="1022.0" width="20" height="18"/><use href="#i_globe" x="1893.0" y="1003.0" width="16" height="16"/><g stroke="#485078" stroke-width="1.6" fill="#c4cce0"><rect x="1430.5" y="1023" width="15" height="15"/><path d="M1438,1023 v15 M1430.500,1030.500 h15" fill="none"/></g><rect x="1371.5" y="1030" width="9" height="8" fill="#e8ecf4" stroke="#4a8a5a" stroke-width="1.4"/><circle cx="1468" cy="1009.8" r="3.6" fill="#e8f0fc" stroke="#3870c8" stroke-width="1.5"/><path d="M1465.300,1012.600 L1461.500,1016.600" stroke="#2858b0" stroke-width="1.8" stroke-linecap="round"/><ellipse cx="1406" cy="1038" rx="15" ry="2.4" fill="#b07040"/><path d="M1405.500,974 Q1405,969 1401.500,966.500" fill="none" stroke="#8a4a18" stroke-width="1.6"/><ellipse cx="1400.800" cy="966.400" rx="2.4" ry="1.9" fill="#8a4a18"/><path d="M1407.500,974 Q1408.500,971 1408.500,968.500" fill="none" stroke="#8a4a18" stroke-width="1.4"/><ellipse cx="1408.700" cy="967.800" rx="1.5" ry="2" fill="#8a4a18"/><g fill="#fff050" stroke="#c88820" stroke-width="0.9"><ellipse cx="1401" cy="1035.500" rx="3.2" ry="3"/><ellipse cx="1413.500" cy="1035.500" rx="3.2" ry="3"/><ellipse cx="1407" cy="1025" rx="12.500" ry="10.500"/><ellipse cx="1389.500" cy="1020.500" rx="4.200" ry="2.800" transform="rotate(-25 1389.500 1020.500)"/><ellipse cx="1423.500" cy="1020.500" rx="4.200" ry="2.800" transform="rotate(25 1423.500 1020.500)"/></g><g fill="#c08848" stroke="#9a5c20" stroke-width="1"><circle cx="1390" cy="977.500" r="6.200"/><circle cx="1423.300" cy="977.500" r="6.200"/><ellipse cx="1406.600" cy="996.500" rx="26.600" ry="23"/></g><circle cx="1390.300" cy="978.300" r="3" fill="#f4b8a0"/><circle cx="1423" cy="978.300" r="3" fill="#f4b8a0"/><ellipse cx="1406.300" cy="1001.400" rx="20.500" ry="17.600" fill="#fff050" stroke="#a86820" stroke-width="1"/><circle cx="1395.400" cy="994" r="1.500" fill="#5a2a10"/><circle cx="1416.500" cy="993.300" r="1.500" fill="#5a2a10"/><ellipse cx="1406.200" cy="997.600" rx="1.400" ry="0.800" fill="#a05818"/><ellipse cx="1391.200" cy="999.800" rx="3.300" ry="2.500" fill="#f8a030" opacity="0.9"/><ellipse cx="1421.200" cy="999.300" rx="3.300" ry="2.500" fill="#f8a030" opacity="0.9"/><path d="M1415.500,1018.500 L1402,1029" stroke="#a86828" stroke-width="1.8"/><g fill="#c08848" stroke="#8a5420" stroke-width="0.8"><circle cx="1391.500" cy="1023.500" r="2.400"/><circle cx="1401.500" cy="1024" r="2.400"/><ellipse cx="1396.300" cy="1029.500" rx="7.600" ry="6.600"/><ellipse cx="1393.500" cy="1036.500" rx="2" ry="1.600"/><ellipse cx="1399.500" cy="1036.500" rx="2" ry="1.600"/></g><circle cx="1392.500" cy="1028.500" r="0.800" fill="#402008"/><circle cx="1399.500" cy="1028.500" r="0.800" fill="#402008"/><ellipse cx="1392" cy="1030.800" rx="1.500" ry="1" fill="#f890c0"/><ellipse cx="1400" cy="1030.800" rx="1.500" ry="1" fill="#f890c0"/><g font-family="'Liberation Sans',sans-serif" font-weight="bold" text-anchor="middle" stroke-linejoin="round"><text filter="url(#ol)" x="1445.500" y="988.500" font-size="22" fill="#fff" stroke="#fff" stroke-width="2.6" transform="rotate(-8 1445.500 980)" textLength="19" lengthAdjust="spacingAndGlyphs">W</text><circle cx="1439.800" cy="993" r="3.800" fill="#c89058" stroke="#a06828" stroke-width="0.8"/><circle cx="1453" cy="993.800" r="3.800" fill="#c89058" stroke="#a06828" stroke-width="0.8"/><text filter="url(#ol)" x="1446" y="1011" font-size="26" fill="#c89058" stroke="#c89058" stroke-width="3" textLength="17" lengthAdjust="spacingAndGlyphs">O</text><text filter="url(#ol)" x="1447" y="1031" font-size="23" fill="#fff050" stroke="#fff050" stroke-width="2.8" transform="rotate(-10 1447 1022)" textLength="19" lengthAdjust="spacingAndGlyphs">W</text></g><circle cx="1442" cy="977" r="1.300" fill="#d8a060"/><circle cx="1449" cy="984" r="1.300" fill="#d8a060"/><circle cx="1452.500" cy="976" r="1.200" fill="#d8a060"/><circle cx="1367.500" cy="1005.700" r="8.300" fill="#8c5c4c"/><text x="1367.500" y="1010.300" font-family="'Liberation Sans',sans-serif" font-size="13" fill="#fff" text-anchor="middle">A</text><circle cx="1374.400" cy="1026.300" r="8.300" fill="#8c5c4c"/><path d="M1371.500,1021.500 l-3.200,2.300 l1.500,2.300 l1.500,-0.900 v6 h6.200 v-6 l1.500,0.900 l1.500,-2.300 l-3.200,-2.300 q-1.450,1.600 -2.900,0 Z" fill="#fff"/></svg>
</body>
</html>
